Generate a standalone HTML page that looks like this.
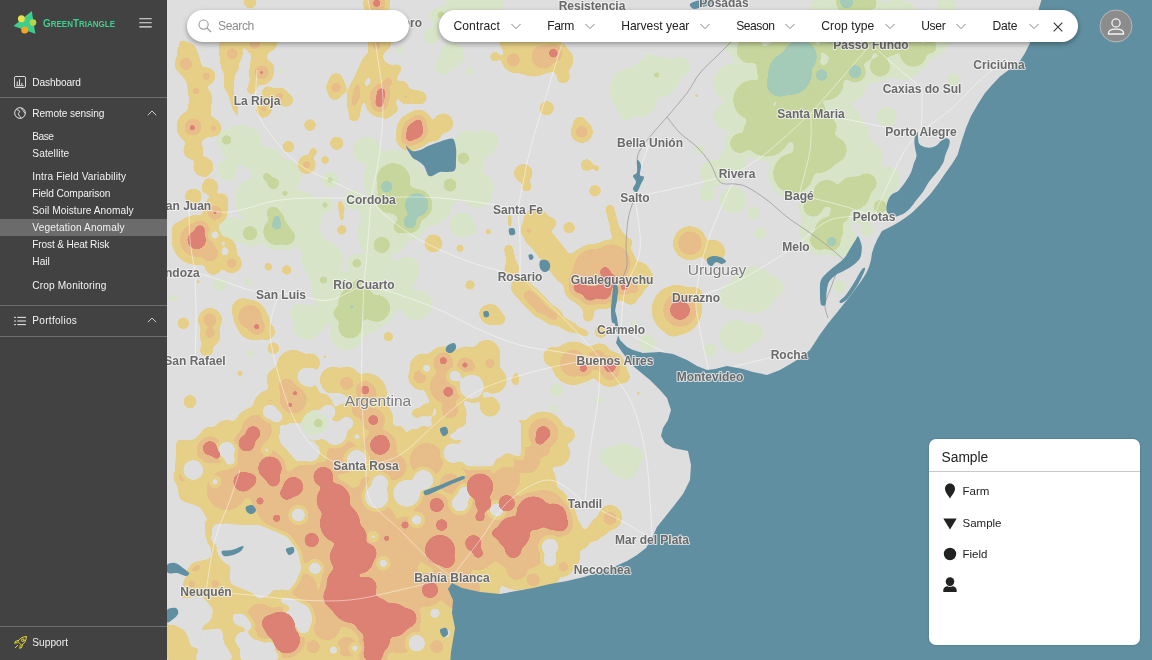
<!DOCTYPE html>
<html lang="en"><head><meta charset="utf-8"><title>GreenTriangle - Vegetation Anomaly</title>
<style>
*{box-sizing:border-box;margin:0;padding:0}
html,body{width:1152px;height:660px;overflow:hidden;background:#dedede;font-family:"Liberation Sans",sans-serif;}
#map{position:absolute;left:0;top:0;width:1152px;height:660px;display:block}
#map,#side,.pill,#legend{will-change:transform}
#side{position:absolute;left:0;top:0;width:167px;height:660px;background:#424242;color:#f2f2f2;font-size:10.15px}
#side .row{position:absolute;left:0;width:167px;height:17px;line-height:17px;white-space:nowrap}
#side .row span{position:absolute;left:32.3px;top:0}
#side .sel{background:#6b6b6b}
#side .hr{position:absolute;left:0;width:167px;height:1px;background:#6e6e6e}
#side svg{position:absolute}
.pill{position:absolute;top:10px;height:32px;border-radius:16px;background:#fff;box-shadow:0 2px 5px rgba(0,0,0,.35)}
.pill span{position:absolute;top:0;line-height:32px;font-size:12.1px;color:#222;white-space:nowrap}
.pill svg{position:absolute}
#legend{position:absolute;left:928.5px;top:439px;width:210.5px;height:205.5px;background:#fff;border-radius:7px;box-shadow:0 0 2px rgba(0,0,0,.25)}
#legend .t{position:absolute;left:12.5px;top:10px;font-size:13.8px;line-height:18px;color:#222}
#legend .hr{position:absolute;left:0;top:32px;width:210.5px;height:1px;background:#c9c9c9}
#legend .i{position:absolute;left:33.5px;font-size:11.5px;line-height:16px;color:#222}
#legend svg{position:absolute}
</style></head><body>
<svg id="map" width="1152" height="660" viewBox="0 0 1152 660">
<defs>
<filter id="goo" filterUnits="userSpaceOnUse" x="0" y="0" width="1152" height="660" color-interpolation-filters="sRGB"><feGaussianBlur stdDeviation="2.2"/><feColorMatrix values="1 0 0 0 0 0 1 0 0 0 0 0 1 0 0 0 0 0 16 -7"/></filter>
</defs>
<rect width="1152" height="660" fill="#dedede"/>
<g fill="#d7e4c8" filter="url(#goo)">
<circle cx="393.3" cy="180" r="30"/>
<circle cx="366.7" cy="150" r="13.3"/>
<circle cx="426.7" cy="200" r="26.7"/>
<circle cx="460" cy="160" r="16.7"/>
<circle cx="483.3" cy="143.3" r="13.3"/>
<circle cx="450" cy="186.7" r="16.7"/>
<circle cx="380" cy="213.3" r="20"/>
<circle cx="353.3" cy="200" r="10"/>
<circle cx="226.7" cy="140" r="9.3"/>
<circle cx="248.3" cy="163.3" r="5"/>
<circle cx="230" cy="176.7" r="4.7"/>
<circle cx="270" cy="180" r="10"/>
<circle cx="283.3" cy="196.7" r="8.3"/>
<circle cx="330" cy="180" r="6"/>
<circle cx="443.3" cy="66.7" r="8.3"/>
<circle cx="453.3" cy="60" r="5"/>
<circle cx="436.7" cy="16.7" r="7.3"/>
<circle cx="400" cy="50" r="4"/>
<circle cx="470" cy="71.7" r="4.3"/>
<circle cx="281.7" cy="70.7" r="3.3"/>
<circle cx="273.3" cy="213.3" r="11.7"/>
<circle cx="323.3" cy="205" r="6.7"/>
<circle cx="260" cy="206.7" r="6.7"/>
<circle cx="306.7" cy="213.3" r="6.7"/>
<circle cx="660" cy="76.7" r="20"/>
<circle cx="640" cy="100" r="16.7"/>
<circle cx="626.7" cy="110" r="10"/>
<circle cx="680" cy="66.7" r="10"/>
<circle cx="650" cy="60" r="6.7"/>
<circle cx="713.3" cy="173.3" r="13.3"/>
<circle cx="706.7" cy="193.3" r="8.3"/>
<circle cx="733.3" cy="200" r="13.3"/>
<circle cx="753.3" cy="213.3" r="6.7"/>
<circle cx="700" cy="150" r="5"/>
<circle cx="820" cy="6.7" r="10"/>
<circle cx="733.3" cy="83.3" r="20"/>
<circle cx="740" cy="40" r="16.7"/>
<circle cx="726.7" cy="116.7" r="13.3"/>
<circle cx="733.3" cy="160" r="13.3"/>
<circle cx="846.7" cy="83.3" r="20"/>
<circle cx="903.3" cy="60" r="20"/>
<circle cx="936.7" cy="40" r="13.3"/>
<circle cx="953.3" cy="80" r="6.7"/>
<circle cx="836.7" cy="106.7" r="13.3"/>
<circle cx="870" cy="156.7" r="13.3"/>
<circle cx="840" cy="173.3" r="16.7"/>
<circle cx="946.7" cy="6.7" r="10"/>
<circle cx="886.7" cy="116.7" r="10"/>
<circle cx="860" cy="133.3" r="10"/>
<circle cx="853.3" cy="26.7" r="30"/>
<circle cx="896.7" cy="30" r="30"/>
<circle cx="933.3" cy="33.3" r="20"/>
<circle cx="840" cy="66.7" r="20"/>
<circle cx="870" cy="66.7" r="16.7"/>
<circle cx="840" cy="126.7" r="23.3"/>
<circle cx="853.3" cy="160" r="26.7"/>
<circle cx="860" cy="193.3" r="30"/>
<circle cx="886.7" cy="180" r="13.3"/>
<circle cx="276.7" cy="230" r="20"/>
<circle cx="250" cy="233.3" r="13.3"/>
<circle cx="310" cy="240" r="13.3"/>
<circle cx="326.7" cy="260" r="16.7"/>
<circle cx="356.7" cy="303.3" r="33.3"/>
<circle cx="393.3" cy="293.3" r="16.7"/>
<circle cx="406.7" cy="270" r="13.3"/>
<circle cx="376.7" cy="263.3" r="16.7"/>
<circle cx="346.7" cy="333.3" r="16.7"/>
<circle cx="306.7" cy="326.7" r="13.3"/>
<circle cx="300" cy="313.3" r="10"/>
<circle cx="320" cy="276.7" r="10"/>
<circle cx="410" cy="223.3" r="16.7"/>
<circle cx="393.3" cy="240" r="13.3"/>
<circle cx="220" cy="285" r="6.7"/>
<circle cx="248.3" cy="281.7" r="4"/>
<circle cx="250" cy="353.3" r="4"/>
<circle cx="313.3" cy="423.3" r="11.7"/>
<circle cx="173.3" cy="298.3" r="4"/>
<circle cx="413.3" cy="310" r="10"/>
<circle cx="473.3" cy="230" r="5"/>
<circle cx="753.3" cy="290" r="23.3"/>
<circle cx="733.3" cy="296.7" r="13.3"/>
<circle cx="773.3" cy="286.7" r="10"/>
<circle cx="736.7" cy="336.7" r="16.7"/>
<circle cx="753.3" cy="333.3" r="10"/>
<circle cx="646.7" cy="343.3" r="8.3"/>
<circle cx="710" cy="350" r="6.7"/>
<circle cx="556.7" cy="390" r="6.7"/>
<circle cx="760" cy="233.3" r="6"/>
<circle cx="600" cy="400" r="4"/>
<circle cx="553.3" cy="408.3" r="4"/>
<circle cx="633.3" cy="323.3" r="3.3"/>
<circle cx="820" cy="230" r="20"/>
<circle cx="833.3" cy="240" r="13.3"/>
<circle cx="623.3" cy="460" r="16.7"/>
<circle cx="610" cy="456.7" r="10"/>
<circle cx="633.3" cy="456.7" r="10"/>
<circle cx="626.7" cy="470" r="10"/>
<circle cx="866.7" cy="230" r="6.7"/>
<circle cx="840" cy="286.7" r="6.7"/>
<circle cx="840" cy="240" r="16.7"/>
<circle cx="466" cy="3" r="20"/>
<circle cx="490" cy="2" r="14"/>
<circle cx="446" cy="16" r="9"/>
<circle cx="432" cy="36" r="8"/>
<circle cx="440" cy="26" r="6"/>
<circle cx="242" cy="145" r="20"/>
<circle cx="267" cy="165" r="17.5"/>
<circle cx="257" cy="200" r="22.5"/>
<circle cx="297" cy="215" r="25"/>
<circle cx="322" cy="260" r="20"/>
<circle cx="332" cy="290" r="20"/>
<circle cx="227" cy="170" r="10"/>
<circle cx="287" cy="175" r="15"/>
<circle cx="462" cy="160" r="22.5"/>
<circle cx="477" cy="190" r="17.5"/>
<circle cx="462" cy="225" r="12.5"/>
<circle cx="452" cy="55" r="12.5"/>
<circle cx="632" cy="90" r="22.5"/>
<circle cx="647" cy="75" r="15"/>
<circle cx="402" cy="280" r="12.5"/>
<circle cx="417" cy="305" r="15"/>
<circle cx="377" cy="235" r="20"/>
<circle cx="232" cy="230" r="12.5"/>
<circle cx="217" cy="260" r="7.5"/>
<circle cx="312" cy="320" r="15"/>
<circle cx="467" cy="140" r="10"/>
<circle cx="492" cy="140" r="7.5"/>
<circle cx="393.3" cy="180" r="21.7"/>
<circle cx="406.7" cy="203.3" r="21.7"/>
<circle cx="390" cy="200" r="18.3"/>
<circle cx="463.3" cy="158.3" r="11"/>
<circle cx="450" cy="185" r="11.7"/>
<circle cx="226.7" cy="140" r="10"/>
<circle cx="273.3" cy="183.3" r="11"/>
<circle cx="266.7" cy="176.7" r="9"/>
<circle cx="273.3" cy="213.3" r="11.7"/>
<circle cx="285" cy="193.3" r="8.3"/>
<circle cx="330" cy="180" r="8.3"/>
<circle cx="325" cy="205" r="8.3"/>
<circle cx="753.3" cy="100" r="25"/>
<circle cx="783.3" cy="66.7" r="31.7"/>
<circle cx="766.7" cy="133.3" r="28.3"/>
<circle cx="800" cy="116.7" r="31.7"/>
<circle cx="816.7" cy="150" r="28.3"/>
<circle cx="793.3" cy="173.3" r="25"/>
<circle cx="826.7" cy="83.3" r="21.7"/>
<circle cx="826.7" cy="193.3" r="18.3"/>
<circle cx="750" cy="50" r="18.3"/>
<circle cx="813.3" cy="206.7" r="15"/>
<circle cx="740" cy="143.3" r="15"/>
<circle cx="833.3" cy="43.3" r="18.3"/>
<circle cx="656.7" cy="75" r="8.3"/>
<circle cx="840" cy="66.7" r="18.3"/>
<circle cx="860" cy="50" r="18.3"/>
<circle cx="886.7" cy="40" r="21.7"/>
<circle cx="913.3" cy="53.3" r="18.3"/>
<circle cx="880" cy="66.7" r="15"/>
<circle cx="930" cy="46.7" r="11.7"/>
<circle cx="830" cy="33.3" r="15"/>
<circle cx="853.3" cy="10" r="18.3"/>
<circle cx="870" cy="3.3" r="11.7"/>
<circle cx="833.3" cy="150" r="18.3"/>
<circle cx="826.7" cy="126.7" r="15"/>
<circle cx="853.3" cy="193.3" r="21.7"/>
<circle cx="866.7" cy="183.3" r="15"/>
<circle cx="840" cy="213.3" r="15"/>
<circle cx="880" cy="206.7" r="11.7"/>
<circle cx="276.7" cy="231.7" r="18.3"/>
<circle cx="286.7" cy="236.7" r="13.3"/>
<circle cx="250" cy="233.3" r="12.3"/>
<circle cx="356.7" cy="303.3" r="23.3"/>
<circle cx="376.7" cy="308.3" r="18.3"/>
<circle cx="350" cy="326.7" r="16.7"/>
<circle cx="360" cy="286.7" r="13.3"/>
<circle cx="356.7" cy="263.3" r="9.7"/>
<circle cx="381.7" cy="245" r="13.3"/>
<circle cx="323.3" cy="280" r="9"/>
<circle cx="410" cy="223.3" r="15"/>
<circle cx="318.3" cy="423.3" r="9.7"/>
<circle cx="400" cy="226.7" r="11.7"/>
<circle cx="340" cy="313.3" r="11.7"/>
<circle cx="826.7" cy="230" r="16.7"/>
<circle cx="830" cy="230" r="18.3"/>
<circle cx="820" cy="240" r="15"/>
<circle cx="441" cy="15" r="9"/>
<circle cx="386.7" cy="186.7" r="15"/>
<circle cx="416.7" cy="205" r="20.7"/>
<circle cx="276.7" cy="218.3" r="12.3"/>
<circle cx="790" cy="73.3" r="30.7"/>
<circle cx="800" cy="56.7" r="25.7"/>
<circle cx="780" cy="83.3" r="22.3"/>
<circle cx="830" cy="36.7" r="15.7"/>
<circle cx="855" cy="71.7" r="15.7"/>
<circle cx="821.7" cy="75" r="15"/>
<circle cx="846.7" cy="1.7" r="15.7"/>
<circle cx="276.7" cy="225" r="14"/>
<circle cx="351.7" cy="306.7" r="11.7"/>
<circle cx="410" cy="221.7" r="15.7"/>
<circle cx="831.7" cy="241.7" r="14"/>
<circle cx="831.7" cy="241.7" r="13"/>
</g>
<g fill="#c7d69c" filter="url(#goo)">
<circle cx="393.3" cy="180" r="16.7"/>
<circle cx="406.7" cy="203.3" r="16.7"/>
<circle cx="390" cy="200" r="13.3"/>
<circle cx="463.3" cy="158.3" r="6"/>
<circle cx="450" cy="185" r="6.7"/>
<circle cx="226.7" cy="140" r="5"/>
<circle cx="273.3" cy="183.3" r="6"/>
<circle cx="266.7" cy="176.7" r="4"/>
<circle cx="273.3" cy="213.3" r="6.7"/>
<circle cx="285" cy="193.3" r="3.3"/>
<circle cx="330" cy="180" r="3.3"/>
<circle cx="325" cy="205" r="3.3"/>
<circle cx="753.3" cy="100" r="20"/>
<circle cx="783.3" cy="66.7" r="26.7"/>
<circle cx="766.7" cy="133.3" r="23.3"/>
<circle cx="800" cy="116.7" r="26.7"/>
<circle cx="816.7" cy="150" r="23.3"/>
<circle cx="793.3" cy="173.3" r="20"/>
<circle cx="826.7" cy="83.3" r="16.7"/>
<circle cx="826.7" cy="193.3" r="13.3"/>
<circle cx="750" cy="50" r="13.3"/>
<circle cx="813.3" cy="206.7" r="10"/>
<circle cx="740" cy="143.3" r="10"/>
<circle cx="833.3" cy="43.3" r="13.3"/>
<circle cx="656.7" cy="75" r="3.3"/>
<circle cx="840" cy="66.7" r="13.3"/>
<circle cx="860" cy="50" r="13.3"/>
<circle cx="886.7" cy="40" r="16.7"/>
<circle cx="913.3" cy="53.3" r="13.3"/>
<circle cx="880" cy="66.7" r="10"/>
<circle cx="930" cy="46.7" r="6.7"/>
<circle cx="830" cy="33.3" r="10"/>
<circle cx="853.3" cy="10" r="13.3"/>
<circle cx="870" cy="3.3" r="6.7"/>
<circle cx="833.3" cy="150" r="13.3"/>
<circle cx="826.7" cy="126.7" r="10"/>
<circle cx="853.3" cy="193.3" r="16.7"/>
<circle cx="866.7" cy="183.3" r="10"/>
<circle cx="840" cy="213.3" r="10"/>
<circle cx="880" cy="206.7" r="6.7"/>
<circle cx="276.7" cy="231.7" r="13.3"/>
<circle cx="286.7" cy="236.7" r="8.3"/>
<circle cx="250" cy="233.3" r="7.3"/>
<circle cx="356.7" cy="303.3" r="18.3"/>
<circle cx="376.7" cy="308.3" r="13.3"/>
<circle cx="350" cy="326.7" r="11.7"/>
<circle cx="360" cy="286.7" r="8.3"/>
<circle cx="356.7" cy="263.3" r="4.7"/>
<circle cx="381.7" cy="245" r="8.3"/>
<circle cx="323.3" cy="280" r="4"/>
<circle cx="410" cy="223.3" r="10"/>
<circle cx="318.3" cy="423.3" r="4.7"/>
<circle cx="400" cy="226.7" r="6.7"/>
<circle cx="340" cy="313.3" r="6.7"/>
<circle cx="826.7" cy="230" r="11.7"/>
<circle cx="830" cy="230" r="13.3"/>
<circle cx="820" cy="240" r="10"/>
<circle cx="441" cy="15" r="4"/>
<circle cx="386.7" cy="186.7" r="10"/>
<circle cx="416.7" cy="205" r="15.7"/>
<circle cx="276.7" cy="218.3" r="7.3"/>
<circle cx="790" cy="73.3" r="25.7"/>
<circle cx="800" cy="56.7" r="20.7"/>
<circle cx="780" cy="83.3" r="17.3"/>
<circle cx="830" cy="36.7" r="10.7"/>
<circle cx="855" cy="71.7" r="10.7"/>
<circle cx="821.7" cy="75" r="10"/>
<circle cx="846.7" cy="1.7" r="10.7"/>
<circle cx="276.7" cy="225" r="9"/>
<circle cx="351.7" cy="306.7" r="6.7"/>
<circle cx="410" cy="221.7" r="10.7"/>
<circle cx="831.7" cy="241.7" r="9"/>
<circle cx="831.7" cy="241.7" r="8"/>
</g>
<g fill="#a3cbb8" filter="url(#goo)">
<circle cx="386.7" cy="186.7" r="6"/>
<circle cx="416.7" cy="205" r="11.7"/>
<circle cx="276.7" cy="218.3" r="3.3"/>
<circle cx="790" cy="73.3" r="21.7"/>
<circle cx="800" cy="56.7" r="16.7"/>
<circle cx="780" cy="83.3" r="13.3"/>
<circle cx="830" cy="36.7" r="6.7"/>
<circle cx="855" cy="71.7" r="6.7"/>
<circle cx="821.7" cy="75" r="6"/>
<circle cx="846.7" cy="1.7" r="6.7"/>
<circle cx="276.7" cy="225" r="5"/>
<circle cx="351.7" cy="306.7" r="2.7"/>
<circle cx="410" cy="221.7" r="6.7"/>
<circle cx="831.7" cy="241.7" r="5"/>
<circle cx="831.7" cy="241.7" r="4"/>
</g>
<mask id="mH" maskUnits="userSpaceOnUse" x="0" y="0" width="1152" height="660"><rect width="1152" height="660" fill="#fff"/><g fill="#000" filter="url(#goo)">
<polygon points="466,421 521,421 521,457.3 507.3,452.7 496,452.7 493.7,466.3 466.3,466.3 455,452.7 462,440"/>
<polygon points="213.1,524.2 259.8,525.3 287.4,537 298,551.8 301.2,568.8 295.9,581.6 287.4,592.2 275.7,577.3 270.4,594.3 259.8,598.6 253.4,593.2 230.1,583.7 232.2,566.7 230.1,560.3 219.4,545.5 211,541.2"/>
<polygon points="167.4,520 204.6,520 205.6,541.2 211,547.6 211,558.2 191.8,562.5 185.5,573.1 167.4,575.2"/>
<polygon points="167.4,594.3 183.4,598.6 202.5,596.4 213.1,609.2 211,619.8 202.5,626.2 198.2,634.6 200.3,647.4 191.8,647.4 185.5,630.4 172.7,624 167.4,626.2"/>
<polygon points="232.2,613.4 244.9,614.5 252.4,626.2 249.2,631.5 238.6,624 233.2,621.9"/>
<polygon points="202.5,630.4 221.6,628.3 223.7,643.1 232.2,655.9 232.2,660.1 194,660.1 200.3,647.4"/>
<polygon points="240.7,647.4 253.4,638.9 270.4,645.3 278.9,655.9 278.9,660.1 240.7,660.1"/>
<polygon points="281,597.5 291.6,598.6 308.6,607 312.9,619.8 308.6,628.3 302.3,613.4 287.4,604.9 280,601.7"/>
<circle cx="310" cy="380" r="7.3"/>
<circle cx="313.3" cy="373.3" r="5"/>
<circle cx="471.7" cy="386.7" r="12"/>
<circle cx="455" cy="376" r="5.7"/>
<circle cx="426.7" cy="368.3" r="4"/>
<circle cx="276.7" cy="416.7" r="6"/>
<circle cx="225" cy="251.7" r="4"/>
<circle cx="223.3" cy="243.3" r="2.7"/>
<circle cx="215" cy="235" r="4"/>
<circle cx="236.7" cy="546.7" r="20"/>
<circle cx="263.3" cy="553.3" r="23.3"/>
<circle cx="276.7" cy="573.3" r="16.7"/>
<circle cx="243.3" cy="573.3" r="13.3"/>
<circle cx="226.7" cy="533.3" r="10"/>
<circle cx="193.3" cy="470" r="10"/>
<circle cx="226.7" cy="450" r="8.3"/>
<circle cx="230" cy="460" r="5"/>
<circle cx="298.3" cy="515" r="6.7"/>
<circle cx="293.3" cy="448.3" r="6"/>
<circle cx="356.7" cy="460" r="10"/>
<circle cx="376.7" cy="496.7" r="11.7"/>
<circle cx="380" cy="483.3" r="8.3"/>
<circle cx="406.7" cy="493.3" r="13.3"/>
<circle cx="423.3" cy="480" r="10"/>
<circle cx="416.7" cy="520" r="5"/>
<circle cx="460" cy="503.3" r="8.3"/>
<circle cx="465" cy="493.3" r="6.7"/>
<circle cx="315" cy="568.3" r="6"/>
<circle cx="355" cy="648.3" r="3.3"/>
<circle cx="260" cy="595" r="4"/>
<circle cx="293.3" cy="616.7" r="8.3"/>
<circle cx="303.3" cy="626.7" r="6.7"/>
<circle cx="240" cy="620" r="6"/>
<circle cx="270" cy="646.7" r="5"/>
<circle cx="253.3" cy="653.3" r="13.3"/>
<circle cx="243.3" cy="640" r="8.3"/>
<circle cx="416.7" cy="643.3" r="8.3"/>
<circle cx="333.3" cy="650" r="4"/>
<circle cx="446.7" cy="633.3" r="4"/>
<circle cx="435" cy="613.3" r="5"/>
<circle cx="383.3" cy="563.3" r="4"/>
<circle cx="373.3" cy="536.7" r="2.7"/>
<circle cx="496.7" cy="510" r="6.7"/>
<circle cx="266.7" cy="450" r="2.7"/>
<circle cx="188.3" cy="506.7" r="4"/>
<circle cx="215" cy="481.7" r="3.3"/>
<circle cx="453.3" cy="453.3" r="10"/>
<circle cx="496.7" cy="450" r="8.3"/>
<circle cx="473.3" cy="446.7" r="5"/>
<circle cx="550" cy="546.7" r="8.3"/>
<circle cx="550" cy="560" r="6.7"/>
<circle cx="306.7" cy="376.7" r="9.3"/>
<circle cx="293.3" cy="436.7" r="14"/>
<circle cx="316.7" cy="425" r="15"/>
<circle cx="335" cy="433.3" r="11.7"/>
<circle cx="310" cy="451.7" r="10"/>
<circle cx="328.3" cy="411.7" r="7.3"/>
<circle cx="270" cy="411.7" r="7.3"/>
<circle cx="300" cy="453.3" r="8.3"/>
<circle cx="346.7" cy="423.3" r="6.7"/>
<circle cx="226.7" cy="411.7" r="8.3"/>
<circle cx="200" cy="420" r="6.7"/>
<circle cx="552.1" cy="249.8" r="2.5"/>
</g></mask>
<mask id="mK" maskUnits="userSpaceOnUse" x="0" y="0" width="1152" height="660"><rect width="1152" height="660" fill="#fff"/><g fill="#000" filter="url(#goo)">
<polygon points="466,421 521,421 521,457.3 507.3,452.7 496,452.7 493.7,466.3 466.3,466.3 455,452.7 462,440" stroke="#000" stroke-width="7" stroke-linejoin="round"/>
<polygon points="213.1,524.2 259.8,525.3 287.4,537 298,551.8 301.2,568.8 295.9,581.6 287.4,592.2 275.7,577.3 270.4,594.3 259.8,598.6 253.4,593.2 230.1,583.7 232.2,566.7 230.1,560.3 219.4,545.5 211,541.2" stroke="#000" stroke-width="7" stroke-linejoin="round"/>
<polygon points="167.4,520 204.6,520 205.6,541.2 211,547.6 211,558.2 191.8,562.5 185.5,573.1 167.4,575.2" stroke="#000" stroke-width="7" stroke-linejoin="round"/>
<polygon points="167.4,594.3 183.4,598.6 202.5,596.4 213.1,609.2 211,619.8 202.5,626.2 198.2,634.6 200.3,647.4 191.8,647.4 185.5,630.4 172.7,624 167.4,626.2" stroke="#000" stroke-width="7" stroke-linejoin="round"/>
<polygon points="232.2,613.4 244.9,614.5 252.4,626.2 249.2,631.5 238.6,624 233.2,621.9" stroke="#000" stroke-width="7" stroke-linejoin="round"/>
<polygon points="202.5,630.4 221.6,628.3 223.7,643.1 232.2,655.9 232.2,660.1 194,660.1 200.3,647.4" stroke="#000" stroke-width="7" stroke-linejoin="round"/>
<polygon points="240.7,647.4 253.4,638.9 270.4,645.3 278.9,655.9 278.9,660.1 240.7,660.1" stroke="#000" stroke-width="7" stroke-linejoin="round"/>
<polygon points="281,597.5 291.6,598.6 308.6,607 312.9,619.8 308.6,628.3 302.3,613.4 287.4,604.9 280,601.7" stroke="#000" stroke-width="7" stroke-linejoin="round"/>
<circle cx="310" cy="380" r="10.8"/>
<circle cx="313.3" cy="373.3" r="8.5"/>
<circle cx="471.7" cy="386.7" r="15.5"/>
<circle cx="455" cy="376" r="9.2"/>
<circle cx="426.7" cy="368.3" r="7.5"/>
<circle cx="276.7" cy="416.7" r="9.5"/>
<circle cx="225" cy="251.7" r="7.5"/>
<circle cx="223.3" cy="243.3" r="6.2"/>
<circle cx="215" cy="235" r="7.5"/>
<circle cx="236.7" cy="546.7" r="23.5"/>
<circle cx="263.3" cy="553.3" r="26.8"/>
<circle cx="276.7" cy="573.3" r="20.2"/>
<circle cx="243.3" cy="573.3" r="16.8"/>
<circle cx="226.7" cy="533.3" r="13.5"/>
<circle cx="193.3" cy="470" r="13.5"/>
<circle cx="226.7" cy="450" r="11.8"/>
<circle cx="230" cy="460" r="8.5"/>
<circle cx="298.3" cy="515" r="10.2"/>
<circle cx="293.3" cy="448.3" r="9.5"/>
<circle cx="356.7" cy="460" r="13.5"/>
<circle cx="376.7" cy="496.7" r="15.2"/>
<circle cx="380" cy="483.3" r="11.8"/>
<circle cx="406.7" cy="493.3" r="16.8"/>
<circle cx="423.3" cy="480" r="13.5"/>
<circle cx="416.7" cy="520" r="8.5"/>
<circle cx="460" cy="503.3" r="11.8"/>
<circle cx="465" cy="493.3" r="10.2"/>
<circle cx="315" cy="568.3" r="9.5"/>
<circle cx="355" cy="648.3" r="6.8"/>
<circle cx="260" cy="595" r="7.5"/>
<circle cx="293.3" cy="616.7" r="11.8"/>
<circle cx="303.3" cy="626.7" r="10.2"/>
<circle cx="240" cy="620" r="9.5"/>
<circle cx="270" cy="646.7" r="8.5"/>
<circle cx="253.3" cy="653.3" r="16.8"/>
<circle cx="243.3" cy="640" r="11.8"/>
<circle cx="416.7" cy="643.3" r="11.8"/>
<circle cx="333.3" cy="650" r="7.5"/>
<circle cx="446.7" cy="633.3" r="7.5"/>
<circle cx="435" cy="613.3" r="8.5"/>
<circle cx="383.3" cy="563.3" r="7.5"/>
<circle cx="373.3" cy="536.7" r="6.2"/>
<circle cx="496.7" cy="510" r="10.2"/>
<circle cx="266.7" cy="450" r="6.2"/>
<circle cx="188.3" cy="506.7" r="7.5"/>
<circle cx="215" cy="481.7" r="6.8"/>
<circle cx="453.3" cy="453.3" r="13.5"/>
<circle cx="496.7" cy="450" r="11.8"/>
<circle cx="473.3" cy="446.7" r="8.5"/>
<circle cx="550" cy="546.7" r="11.8"/>
<circle cx="550" cy="560" r="10.2"/>
<circle cx="306.7" cy="376.7" r="12.8"/>
<circle cx="293.3" cy="436.7" r="17.5"/>
<circle cx="316.7" cy="425" r="18.5"/>
<circle cx="335" cy="433.3" r="15.2"/>
<circle cx="310" cy="451.7" r="13.5"/>
<circle cx="328.3" cy="411.7" r="10.8"/>
<circle cx="270" cy="411.7" r="10.8"/>
<circle cx="300" cy="453.3" r="11.8"/>
<circle cx="346.7" cy="423.3" r="10.2"/>
<circle cx="226.7" cy="411.7" r="11.8"/>
<circle cx="200" cy="420" r="10.2"/>
<circle cx="552.1" cy="249.8" r="6"/>
</g></mask>
<g mask="url(#mH)"><g fill="#e6cf87" filter="url(#goo)">
<polygon points="176.7,440 500,440 500,660 166.7,660 166.7,613.3 180,600 190,586.7 186.7,566.7 206.7,550 210,523.3 200,506.7 180,500 175,473.3"/>
<circle cx="193.3" cy="126.7" r="16.7"/>
<circle cx="210" cy="126.7" r="10"/>
<circle cx="193.3" cy="150" r="10"/>
<circle cx="203.3" cy="166.7" r="10"/>
<circle cx="210" cy="186.7" r="8.3"/>
<circle cx="193.3" cy="196.7" r="8.3"/>
<circle cx="376.7" cy="10" r="10"/>
<circle cx="413.3" cy="130" r="16.7"/>
<circle cx="443.3" cy="123.3" r="10"/>
<circle cx="433.3" cy="133.3" r="8.3"/>
<circle cx="310" cy="125" r="6"/>
<circle cx="288.3" cy="146.7" r="6"/>
<circle cx="306.7" cy="163.3" r="8.3"/>
<circle cx="313.3" cy="151.7" r="4"/>
<circle cx="336.7" cy="143.3" r="6.7"/>
<circle cx="325" cy="160" r="4.3"/>
<circle cx="495" cy="56.7" r="5"/>
<circle cx="216.7" cy="206.7" r="11.7"/>
<circle cx="221.7" cy="200" r="6.7"/>
<circle cx="341.7" cy="208.3" r="3.3"/>
<circle cx="250" cy="1.7" r="6.7"/>
<circle cx="533.3" cy="53.3" r="23.3"/>
<circle cx="516.7" cy="60" r="13.3"/>
<circle cx="560" cy="60" r="13.3"/>
<circle cx="563.3" cy="76.7" r="6.7"/>
<circle cx="510" cy="43.3" r="10"/>
<circle cx="546.7" cy="108.3" r="7.3"/>
<circle cx="581.7" cy="131.7" r="10.7"/>
<circle cx="580" cy="123.3" r="6.7"/>
<circle cx="523.3" cy="173.3" r="9.3"/>
<circle cx="526.7" cy="186.7" r="5"/>
<circle cx="586.7" cy="165" r="6"/>
<circle cx="596.7" cy="168.3" r="3.3"/>
<circle cx="595" cy="190.7" r="6"/>
<circle cx="696.7" cy="95.7" r="2.7"/>
<circle cx="196.7" cy="240" r="25"/>
<circle cx="223.3" cy="250" r="13.3"/>
<circle cx="231.7" cy="263.3" r="10"/>
<circle cx="213.3" cy="266.7" r="8.3"/>
<circle cx="180" cy="230" r="8.3"/>
<circle cx="210" cy="320" r="11.7"/>
<circle cx="210" cy="336.7" r="10"/>
<circle cx="206.7" cy="350" r="6.7"/>
<circle cx="183.3" cy="323.3" r="6"/>
<circle cx="190" cy="401.7" r="6.7"/>
<circle cx="240" cy="373.3" r="3.3"/>
<circle cx="273.3" cy="348.3" r="6"/>
<circle cx="243.3" cy="310" r="11.7"/>
<circle cx="253.3" cy="323.3" r="16.7"/>
<circle cx="266.7" cy="331.7" r="8.3"/>
<circle cx="286.7" cy="270" r="5"/>
<circle cx="268.3" cy="266.7" r="4.3"/>
<circle cx="341.7" cy="230" r="5"/>
<circle cx="433.3" cy="243.3" r="9"/>
<circle cx="460" cy="248.3" r="4"/>
<circle cx="470" cy="285" r="5"/>
<circle cx="388.3" cy="336.7" r="5"/>
<circle cx="488.3" cy="231.7" r="3.3"/>
<circle cx="198.3" cy="281.7" r="2.7"/>
<circle cx="450" cy="270" r="2"/>
<circle cx="325" cy="356.7" r="2.7"/>
<circle cx="293.3" cy="366.7" r="16.7"/>
<circle cx="310" cy="363.3" r="10"/>
<circle cx="293.3" cy="400" r="26.7"/>
<circle cx="270" cy="406.7" r="16.7"/>
<circle cx="256.7" cy="430" r="23.3"/>
<circle cx="320" cy="406.7" r="13.3"/>
<circle cx="333.3" cy="380" r="13.3"/>
<circle cx="346.7" cy="380" r="13.3"/>
<circle cx="366.7" cy="393.3" r="20"/>
<circle cx="373.3" cy="420" r="20"/>
<circle cx="346.7" cy="420" r="16.7"/>
<circle cx="320" cy="433.3" r="13.3"/>
<circle cx="226.7" cy="433.3" r="13.3"/>
<circle cx="210" cy="436.7" r="10"/>
<circle cx="280" cy="380" r="13.3"/>
<circle cx="423.3" cy="366.7" r="13.3"/>
<circle cx="443.3" cy="363.3" r="16.7"/>
<circle cx="466.7" cy="363.3" r="16.7"/>
<circle cx="486.7" cy="353.3" r="13.3"/>
<circle cx="493.3" cy="380" r="13.3"/>
<circle cx="446.7" cy="390" r="20"/>
<circle cx="420" cy="380" r="10"/>
<circle cx="453.3" cy="413.3" r="13.3"/>
<circle cx="473.3" cy="393.3" r="10"/>
<circle cx="490" cy="313.3" r="7.3"/>
<circle cx="426.7" cy="410" r="6.7"/>
<circle cx="416.7" cy="413.3" r="5"/>
<circle cx="490" cy="406.7" r="10"/>
<circle cx="690" cy="243.3" r="16.7"/>
<circle cx="713.3" cy="251.7" r="11.7"/>
<circle cx="676.7" cy="310" r="25"/>
<circle cx="673.3" cy="326.7" r="10"/>
<circle cx="693.3" cy="296.7" r="10"/>
<circle cx="573.3" cy="363.3" r="21.7"/>
<circle cx="553.3" cy="356.7" r="10"/>
<circle cx="600" cy="353.3" r="10"/>
<circle cx="610" cy="370" r="16.7"/>
<circle cx="623.3" cy="376.7" r="6.7"/>
<circle cx="515" cy="380" r="4"/>
<circle cx="638.3" cy="393.3" r="2.7"/>
<circle cx="543.3" cy="433.3" r="21.7"/>
<circle cx="520" cy="426.7" r="6.7"/>
<circle cx="566.7" cy="435" r="8.3"/>
<circle cx="665" cy="232.7" r="2"/>
<circle cx="516.7" cy="456.7" r="26.7"/>
<circle cx="540" cy="450" r="20"/>
<circle cx="556.7" cy="453.3" r="13.3"/>
<circle cx="533.3" cy="483.3" r="23.3"/>
<circle cx="550" cy="506.7" r="20"/>
<circle cx="516.7" cy="523.3" r="33.3"/>
<circle cx="566.7" cy="533.3" r="16.7"/>
<circle cx="516.7" cy="566.7" r="23.3"/>
<circle cx="543.3" cy="573.3" r="16.7"/>
<circle cx="610" cy="516.7" r="11.7"/>
<circle cx="600" cy="526.7" r="10"/>
<circle cx="593.3" cy="533.3" r="8.3"/>
<circle cx="580" cy="540" r="10"/>
<circle cx="566.7" cy="556.7" r="13.3"/>
<circle cx="506.7" cy="490" r="20"/>
<circle cx="326.6" cy="60" r="1.8"/>
<circle cx="402.7" cy="86.4" r="5.6"/>
<circle cx="234.5" cy="42.4" r="9"/>
<circle cx="266.1" cy="41.3" r="11.3"/>
<circle cx="182.6" cy="43.5" r="3.4"/>
<circle cx="448.2" cy="425.5" r="9.1"/>
<circle cx="459.5" cy="420.9" r="6.8"/>
<circle cx="436.8" cy="420.9" r="5.7"/>
<circle cx="501.6" cy="459.5" r="5.7"/>
<circle cx="414.1" cy="436.8" r="8"/>
<circle cx="432.3" cy="435.7" r="9.1"/>
<circle cx="398.2" cy="432.3" r="6.8"/>
<circle cx="445.9" cy="441.4" r="5.7"/>
<circle cx="423.2" cy="430" r="4.5"/>
<circle cx="218.4" cy="556.1" r="9.6"/>
<circle cx="200.3" cy="575.2" r="11.7"/>
<circle cx="208.8" cy="532.7" r="3"/>
<circle cx="528.8" cy="227.6" r="7.4"/>
<circle cx="550" cy="223.3" r="6.4"/>
<circle cx="590.3" cy="274.2" r="27.6"/>
<circle cx="611.5" cy="267.9" r="25.5"/>
<circle cx="598.8" cy="284.8" r="21.2"/>
<circle cx="628.5" cy="242.4" r="4.2"/>
<circle cx="636.9" cy="276.4" r="14.8"/>
<circle cx="647.6" cy="278.5" r="6.4"/>
<circle cx="630.6" cy="297.6" r="7.4"/>
<circle cx="490.6" cy="314.5" r="10.6"/>
<circle cx="499.1" cy="318.8" r="6.4"/>
<circle cx="569.1" cy="227.6" r="5.9"/>
<circle cx="487.4" cy="231.8" r="1.9"/>
<circle cx="587.1" cy="211.7" r="1.5"/>
<circle cx="571.8" cy="208.1" r="1.5"/>
<circle cx="579.7" cy="228" r="1.5"/>
<circle cx="665.6" cy="232.9" r="2.1"/>
<circle cx="656" cy="260.4" r="1.5"/>
<circle cx="600.9" cy="331.5" r="6.4"/>
<circle cx="193.3" cy="126.7" r="13.3"/>
<circle cx="213.3" cy="128.3" r="8.3"/>
<circle cx="376.7" cy="6.7" r="11.7"/>
<circle cx="413.3" cy="130" r="15"/>
<circle cx="306.7" cy="165" r="9"/>
<circle cx="213.3" cy="211.7" r="10"/>
<circle cx="543.3" cy="56.7" r="16.7"/>
<circle cx="513.3" cy="60" r="11.7"/>
<circle cx="581.7" cy="131.7" r="11"/>
<circle cx="196.7" cy="240" r="21.7"/>
<circle cx="210" cy="253.3" r="13.3"/>
<circle cx="231.7" cy="263.3" r="10"/>
<circle cx="210" cy="320" r="11.7"/>
<circle cx="210" cy="333.3" r="10"/>
<circle cx="250" cy="316.7" r="16.7"/>
<circle cx="256.7" cy="326.7" r="13.3"/>
<circle cx="293.3" cy="400" r="18.3"/>
<circle cx="286.7" cy="386.7" r="13.3"/>
<circle cx="256.7" cy="430" r="20"/>
<circle cx="270" cy="406.7" r="11.7"/>
<circle cx="366.7" cy="393.3" r="15"/>
<circle cx="346.7" cy="383.3" r="11.7"/>
<circle cx="373.3" cy="420" r="16.7"/>
<circle cx="360" cy="410" r="13.3"/>
<circle cx="446.7" cy="386.7" r="21.7"/>
<circle cx="443.3" cy="363.3" r="15"/>
<circle cx="466.7" cy="366.7" r="13.3"/>
<circle cx="420" cy="376.7" r="11.7"/>
<circle cx="450" cy="410" r="13.3"/>
<circle cx="486.7" cy="313.3" r="7.7"/>
<circle cx="490" cy="363.3" r="10"/>
<circle cx="690" cy="243.3" r="16.7"/>
<circle cx="680" cy="310" r="21.7"/>
<circle cx="573.3" cy="363.3" r="18.3"/>
<circle cx="596.7" cy="360" r="15"/>
<circle cx="610" cy="370" r="15"/>
<circle cx="543.3" cy="433.3" r="20"/>
<circle cx="260" cy="473.3" r="31.7"/>
<circle cx="310" cy="490" r="31.7"/>
<circle cx="293.3" cy="523.3" r="25"/>
<circle cx="326.7" cy="540" r="38.3"/>
<circle cx="360" cy="590" r="45"/>
<circle cx="376.7" cy="523.3" r="25"/>
<circle cx="410" cy="540" r="25"/>
<circle cx="443.3" cy="540" r="35"/>
<circle cx="476.7" cy="506.7" r="31.7"/>
<circle cx="426.7" cy="506.7" r="18.3"/>
<circle cx="393.3" cy="466.7" r="18.3"/>
<circle cx="380" cy="446.7" r="21.7"/>
<circle cx="210" cy="450" r="18.3"/>
<circle cx="243.3" cy="480" r="21.7"/>
<circle cx="303.3" cy="586.7" r="18.3"/>
<circle cx="280" cy="630" r="28.3"/>
<circle cx="260" cy="616.7" r="18.3"/>
<circle cx="400" cy="633.3" r="25"/>
<circle cx="426.7" cy="590" r="21.7"/>
<circle cx="443.3" cy="580" r="18.3"/>
<circle cx="460" cy="556.7" r="21.7"/>
<circle cx="366.7" cy="483.3" r="11.7"/>
<circle cx="436.7" cy="646.7" r="11.7"/>
<circle cx="193.3" cy="476.7" r="10"/>
<circle cx="183.3" cy="476.7" r="10"/>
<circle cx="206.7" cy="530" r="8.3"/>
<circle cx="326.7" cy="626.7" r="18.3"/>
<circle cx="313.3" cy="646.7" r="11.7"/>
<circle cx="346.7" cy="646.7" r="15"/>
<circle cx="195" cy="566.7" r="10"/>
<circle cx="226.7" cy="490" r="25"/>
<circle cx="276.7" cy="506.7" r="25"/>
<circle cx="360" cy="506.7" r="25"/>
<circle cx="393.3" cy="556.7" r="31.7"/>
<circle cx="460" cy="590" r="25"/>
<circle cx="476.7" cy="550" r="25"/>
<circle cx="410" cy="590" r="25"/>
<circle cx="310" cy="606.7" r="21.7"/>
<circle cx="243.3" cy="460" r="18.3"/>
<circle cx="343.3" cy="456.7" r="21.7"/>
<circle cx="426.7" cy="460" r="21.7"/>
<circle cx="476.7" cy="460" r="21.7"/>
<circle cx="450" cy="483.3" r="15"/>
<circle cx="526.7" cy="460" r="18.3"/>
<circle cx="543.3" cy="450" r="11.7"/>
<circle cx="520" cy="533.3" r="41.7"/>
<circle cx="543.3" cy="513.3" r="28.3"/>
<circle cx="560" cy="523.3" r="18.3"/>
<circle cx="610" cy="518.3" r="11.7"/>
<circle cx="563.3" cy="566.7" r="10"/>
<circle cx="516.7" cy="570" r="15"/>
<circle cx="533.3" cy="580" r="11.7"/>
<circle cx="506.7" cy="480" r="18.3"/>
<circle cx="186" cy="63.9" r="11.3"/>
<circle cx="206.3" cy="76.3" r="9.1"/>
<circle cx="196.1" cy="90.9" r="8.6"/>
<circle cx="232.2" cy="53.7" r="10.6"/>
<circle cx="261.6" cy="71.8" r="10"/>
<circle cx="279.6" cy="96.6" r="9.1"/>
<circle cx="263.8" cy="109" r="8.2"/>
<circle cx="336.1" cy="87.6" r="10"/>
<circle cx="356.4" cy="95.5" r="9.1"/>
<circle cx="376.7" cy="45.8" r="9.1"/>
<circle cx="380.1" cy="95.5" r="15.2"/>
<circle cx="388" cy="81.9" r="9.5"/>
<circle cx="406" cy="96.6" r="7.7"/>
<circle cx="254.8" cy="43.5" r="10.6"/>
<circle cx="191.8" cy="583.7" r="8.8"/>
<circle cx="215.2" cy="583.7" r="9.2"/>
<circle cx="528.8" cy="230.8" r="8"/>
<circle cx="594.5" cy="270" r="26.2"/>
<circle cx="611.5" cy="263.6" r="24.1"/>
<circle cx="598.8" cy="289.1" r="19.8"/>
<circle cx="581.8" cy="280.6" r="17.7"/>
<circle cx="511.8" cy="268.9" r="7.5"/>
<circle cx="628.5" cy="284.8" r="11.4"/>
<circle cx="634.8" cy="289.1" r="9.2"/>
<circle cx="192.3" cy="127.7" r="12.8"/>
<circle cx="415" cy="130.7" r="17.8"/>
<circle cx="410" cy="136.7" r="14.2"/>
<circle cx="418.3" cy="123.3" r="13.5"/>
<circle cx="215" cy="212.7" r="12.2"/>
<circle cx="376.7" cy="3.3" r="13.5"/>
<circle cx="553.3" cy="53.3" r="14.2"/>
<circle cx="196.7" cy="240" r="18.8"/>
<circle cx="200" cy="230" r="14.5"/>
<circle cx="256.7" cy="326.7" r="12.8"/>
<circle cx="295" cy="393.3" r="12.5"/>
<circle cx="290" cy="405" r="12.5"/>
<circle cx="253.3" cy="433.3" r="16.8"/>
<circle cx="365" cy="390" r="14.2"/>
<circle cx="373.3" cy="420" r="14.8"/>
<circle cx="443.3" cy="360.7" r="13.5"/>
<circle cx="465" cy="365" r="12.8"/>
<circle cx="448.3" cy="391.7" r="14.8"/>
<circle cx="383.3" cy="438.3" r="12.8"/>
<circle cx="680" cy="310" r="19.5"/>
<circle cx="583.3" cy="368.3" r="13.5"/>
<circle cx="610" cy="366.7" r="15.5"/>
<circle cx="543.3" cy="433.3" r="16.8"/>
<circle cx="210" cy="448.3" r="16.8"/>
<circle cx="216.7" cy="455" r="13.5"/>
<circle cx="246.7" cy="443.3" r="17.8"/>
<circle cx="270" cy="468.3" r="21.2"/>
<circle cx="273.3" cy="480" r="16.2"/>
<circle cx="243.3" cy="481.7" r="19.5"/>
<circle cx="250" cy="480" r="16.2"/>
<circle cx="293.3" cy="486.7" r="19.5"/>
<circle cx="286.7" cy="493.3" r="16.2"/>
<circle cx="260" cy="501" r="13.5"/>
<circle cx="276.7" cy="518.3" r="13.5"/>
<circle cx="311.7" cy="540" r="16.8"/>
<circle cx="380" cy="445" r="19.5"/>
<circle cx="386.7" cy="538.3" r="12.8"/>
<circle cx="405" cy="525" r="13.5"/>
<circle cx="436.7" cy="505" r="16.8"/>
<circle cx="441.7" cy="525" r="15.5"/>
<circle cx="480" cy="486.7" r="22.8"/>
<circle cx="483.3" cy="503.3" r="17.8"/>
<circle cx="480" cy="516.7" r="14.5"/>
<circle cx="440" cy="550" r="24.5"/>
<circle cx="446.7" cy="560" r="17.8"/>
<circle cx="473.3" cy="543.3" r="17.8"/>
<circle cx="478.3" cy="553.3" r="14.5"/>
<circle cx="496.7" cy="533.3" r="14.5"/>
<circle cx="430" cy="590" r="17.8"/>
<circle cx="323.3" cy="476.7" r="19.5"/>
<circle cx="333.3" cy="500" r="26.2"/>
<circle cx="340" cy="523.3" r="29.5"/>
<circle cx="353.3" cy="536.7" r="22.8"/>
<circle cx="346.7" cy="556.7" r="26.2"/>
<circle cx="360" cy="560" r="22.8"/>
<circle cx="366.7" cy="553.3" r="19.5"/>
<circle cx="343.3" cy="583.3" r="26.2"/>
<circle cx="353.3" cy="600" r="32.8"/>
<circle cx="336.7" cy="596.7" r="22.8"/>
<circle cx="373.3" cy="616.7" r="29.5"/>
<circle cx="393.3" cy="620" r="26.2"/>
<circle cx="406.7" cy="618.3" r="19.5"/>
<circle cx="376.7" cy="640" r="22.8"/>
<circle cx="373.3" cy="653.3" r="19.5"/>
<circle cx="366.7" cy="586.7" r="19.5"/>
<circle cx="280" cy="626.7" r="24.5"/>
<circle cx="286.7" cy="640" r="22.8"/>
<circle cx="270" cy="623.3" r="17.8"/>
<circle cx="533.3" cy="513.3" r="26.2"/>
<circle cx="553.3" cy="516.7" r="22.8"/>
<circle cx="513.3" cy="533.3" r="26.2"/>
<circle cx="513.3" cy="550" r="17.8"/>
<circle cx="506.7" cy="503.3" r="17.8"/>
<circle cx="560" cy="523.3" r="17.8"/>
<circle cx="540" cy="440" r="14.5"/>
<circle cx="261.6" cy="72.4" r="12.2"/>
<circle cx="579.7" cy="287" r="15.9"/>
<circle cx="590.3" cy="293.3" r="16.9"/>
<circle cx="603" cy="291.2" r="18"/>
<circle cx="609.4" cy="280.6" r="16.9"/>
<circle cx="605.1" cy="272.1" r="14.8"/>
<circle cx="624.2" cy="287" r="13.3"/>
<path d="M187.1 52.6L193.9 75.1" stroke="#e6cf87" stroke-width="20.3" stroke-linecap="round"/>
<path d="M180.3 63.9L187.1 72.9" stroke="#e6cf87" stroke-width="11.3" stroke-linecap="round"/>
<path d="M193.9 75.1L200.6 97.7" stroke="#e6cf87" stroke-width="18.1" stroke-linecap="round"/>
<path d="M200.6 97.7L198.4 120.3" stroke="#e6cf87" stroke-width="22.6" stroke-linecap="round"/>
<path d="M227.7 45.8L230 66.1" stroke="#e6cf87" stroke-width="18.1" stroke-linecap="round"/>
<path d="M230 66.1L228.8 86.4" stroke="#e6cf87" stroke-width="10.2" stroke-linecap="round"/>
<path d="M228.8 86.4L235.6 109" stroke="#e6cf87" stroke-width="5.6" stroke-linecap="round"/>
<path d="M235.6 109L237.9 116.9" stroke="#e6cf87" stroke-width="3.2" stroke-linecap="round"/>
<path d="M259.3 54.8L257.1 75.1" stroke="#e6cf87" stroke-width="15.8" stroke-linecap="round"/>
<path d="M257.1 75.1L251.4 89.8" stroke="#e6cf87" stroke-width="9" stroke-linecap="round"/>
<path d="M266.1 63.9L270.6 66.1" stroke="#e6cf87" stroke-width="6.8" stroke-linecap="round"/>
<path d="M268.4 93.2L286.4 100" stroke="#e6cf87" stroke-width="13.5" stroke-linecap="round"/>
<path d="M266.1 97.7L263.8 113.5" stroke="#e6cf87" stroke-width="9" stroke-linecap="round"/>
<path d="M336.1 79.7L334.9 93.2" stroke="#e6cf87" stroke-width="13.5" stroke-linecap="round"/>
<path d="M385.7 43.5L367.7 61.6" stroke="#e6cf87" stroke-width="11.3" stroke-linecap="round"/>
<path d="M367.7 61.6L358.6 81.9" stroke="#e6cf87" stroke-width="11.3" stroke-linecap="round"/>
<path d="M358.6 81.9L354.1 115.8" stroke="#e6cf87" stroke-width="11.3" stroke-linecap="round"/>
<path d="M376.7 57.1L383.5 75.1" stroke="#e6cf87" stroke-width="11.3" stroke-linecap="round"/>
<path d="M383.5 75.1L383.5 104.5" stroke="#e6cf87" stroke-width="24.8" stroke-linecap="round"/>
<path d="M397 68.4L388 81.9" stroke="#e6cf87" stroke-width="9" stroke-linecap="round"/>
<path d="M406 95.5L420 97.7" stroke="#e6cf87" stroke-width="13.5" stroke-linecap="round"/>
<path d="M394.8 109L385.7 115.8" stroke="#e6cf87" stroke-width="6.8" stroke-linecap="round"/>
<path d="M367.7 68.4L369.9 75.1" stroke="#e6cf87" stroke-width="4.5" stroke-linecap="round"/>
<path d="M516.4 373.2L516.4 384.5" stroke="#e6cf87" stroke-width="4.1" stroke-linecap="round"/>
<path d="M502.7 457.3L505 464.1" stroke="#e6cf87" stroke-width="6.8" stroke-linecap="round"/>
<path d="M340 201L342 220" stroke="#e6cf87" stroke-width="4" stroke-linecap="round"/>
<path d="M536.2 221.2L537.3 236.1" stroke="#e6cf87" stroke-width="25.5" stroke-linecap="round"/>
<path d="M543.6 242.4L567 272.1" stroke="#e6cf87" stroke-width="25.5" stroke-linecap="round"/>
<path d="M609.8 208.5L615.7 231.8" stroke="#e6cf87" stroke-width="8.5" stroke-linecap="round"/>
<path d="M615.7 231.8L625.3 244.5" stroke="#e6cf87" stroke-width="10.6" stroke-linecap="round"/>
<path d="M588.2 306L588.2 316.6" stroke="#e6cf87" stroke-width="10.6" stroke-linecap="round"/>
<path d="M509.7 214.8L509.7 226.5" stroke="#e6cf87" stroke-width="3.8" stroke-linecap="round"/>
<path d="M508.6 248.8L512.9 270" stroke="#e6cf87" stroke-width="8.9" stroke-linecap="round"/>
<path d="M520.3 287L535.1 301.8" stroke="#e6cf87" stroke-width="19.1" stroke-linecap="round"/>
<path d="M535.1 301.8L552.1 316.6" stroke="#e6cf87" stroke-width="17" stroke-linecap="round"/>
<path d="M552.1 316.6L571.2 327.3" stroke="#e6cf87" stroke-width="10.6" stroke-linecap="round"/>
<path d="M571.2 327.3L586 333.6" stroke="#e6cf87" stroke-width="6.4" stroke-linecap="round"/>
<path d="M357.5 86.4L354.1 104.5" stroke="#e6cf87" stroke-width="15" stroke-linecap="round"/>
<path d="M528.8 295.4L541.5 308.2" stroke="#e6cf87" stroke-width="20.6" stroke-linecap="round"/>
<path d="M541.5 308.2L554.2 316.6" stroke="#e6cf87" stroke-width="17.4" stroke-linecap="round"/>
<path d="M381.2 92.1L379.4 103.4" stroke="#e6cf87" stroke-width="27.1" stroke-linecap="round"/>
</g></g>
<g mask="url(#mK)"><g fill="#e7bd89" filter="url(#goo)">
<circle cx="193.3" cy="126.7" r="8.3"/>
<circle cx="213.3" cy="128.3" r="3.3"/>
<circle cx="376.7" cy="6.7" r="6.7"/>
<circle cx="413.3" cy="130" r="10"/>
<circle cx="306.7" cy="165" r="4"/>
<circle cx="213.3" cy="211.7" r="5"/>
<circle cx="543.3" cy="56.7" r="11.7"/>
<circle cx="513.3" cy="60" r="6.7"/>
<circle cx="581.7" cy="131.7" r="6"/>
<circle cx="196.7" cy="240" r="16.7"/>
<circle cx="210" cy="253.3" r="8.3"/>
<circle cx="231.7" cy="263.3" r="5"/>
<circle cx="210" cy="320" r="6.7"/>
<circle cx="210" cy="333.3" r="5"/>
<circle cx="250" cy="316.7" r="11.7"/>
<circle cx="256.7" cy="326.7" r="8.3"/>
<circle cx="293.3" cy="400" r="13.3"/>
<circle cx="286.7" cy="386.7" r="8.3"/>
<circle cx="256.7" cy="430" r="15"/>
<circle cx="270" cy="406.7" r="6.7"/>
<circle cx="366.7" cy="393.3" r="10"/>
<circle cx="346.7" cy="383.3" r="6.7"/>
<circle cx="373.3" cy="420" r="11.7"/>
<circle cx="360" cy="410" r="8.3"/>
<circle cx="446.7" cy="386.7" r="16.7"/>
<circle cx="443.3" cy="363.3" r="10"/>
<circle cx="466.7" cy="366.7" r="8.3"/>
<circle cx="420" cy="376.7" r="6.7"/>
<circle cx="450" cy="410" r="8.3"/>
<circle cx="486.7" cy="313.3" r="2.7"/>
<circle cx="490" cy="363.3" r="5"/>
<circle cx="690" cy="243.3" r="11.7"/>
<circle cx="680" cy="310" r="16.7"/>
<circle cx="573.3" cy="363.3" r="13.3"/>
<circle cx="596.7" cy="360" r="10"/>
<circle cx="610" cy="370" r="10"/>
<circle cx="543.3" cy="433.3" r="15"/>
<circle cx="260" cy="473.3" r="26.7"/>
<circle cx="310" cy="490" r="26.7"/>
<circle cx="293.3" cy="523.3" r="20"/>
<circle cx="326.7" cy="540" r="33.3"/>
<circle cx="360" cy="590" r="40"/>
<circle cx="376.7" cy="523.3" r="20"/>
<circle cx="410" cy="540" r="20"/>
<circle cx="443.3" cy="540" r="30"/>
<circle cx="476.7" cy="506.7" r="26.7"/>
<circle cx="426.7" cy="506.7" r="13.3"/>
<circle cx="393.3" cy="466.7" r="13.3"/>
<circle cx="380" cy="446.7" r="16.7"/>
<circle cx="210" cy="450" r="13.3"/>
<circle cx="243.3" cy="480" r="16.7"/>
<circle cx="303.3" cy="586.7" r="13.3"/>
<circle cx="280" cy="630" r="23.3"/>
<circle cx="260" cy="616.7" r="13.3"/>
<circle cx="400" cy="633.3" r="20"/>
<circle cx="426.7" cy="590" r="16.7"/>
<circle cx="443.3" cy="580" r="13.3"/>
<circle cx="460" cy="556.7" r="16.7"/>
<circle cx="366.7" cy="483.3" r="6.7"/>
<circle cx="436.7" cy="646.7" r="6.7"/>
<circle cx="193.3" cy="476.7" r="5"/>
<circle cx="183.3" cy="476.7" r="5"/>
<circle cx="206.7" cy="530" r="3.3"/>
<circle cx="326.7" cy="626.7" r="13.3"/>
<circle cx="313.3" cy="646.7" r="6.7"/>
<circle cx="346.7" cy="646.7" r="10"/>
<circle cx="195" cy="566.7" r="5"/>
<circle cx="226.7" cy="490" r="20"/>
<circle cx="276.7" cy="506.7" r="20"/>
<circle cx="360" cy="506.7" r="20"/>
<circle cx="393.3" cy="556.7" r="26.7"/>
<circle cx="460" cy="590" r="20"/>
<circle cx="476.7" cy="550" r="20"/>
<circle cx="410" cy="590" r="20"/>
<circle cx="310" cy="606.7" r="16.7"/>
<circle cx="243.3" cy="460" r="13.3"/>
<circle cx="343.3" cy="456.7" r="16.7"/>
<circle cx="426.7" cy="460" r="16.7"/>
<circle cx="476.7" cy="460" r="16.7"/>
<circle cx="450" cy="483.3" r="10"/>
<circle cx="526.7" cy="460" r="13.3"/>
<circle cx="543.3" cy="450" r="6.7"/>
<circle cx="520" cy="533.3" r="36.7"/>
<circle cx="543.3" cy="513.3" r="23.3"/>
<circle cx="560" cy="523.3" r="13.3"/>
<circle cx="610" cy="518.3" r="6.7"/>
<circle cx="563.3" cy="566.7" r="5"/>
<circle cx="516.7" cy="570" r="10"/>
<circle cx="533.3" cy="580" r="6.7"/>
<circle cx="506.7" cy="480" r="13.3"/>
<circle cx="186" cy="63.9" r="6.3"/>
<circle cx="206.3" cy="76.3" r="4.1"/>
<circle cx="196.1" cy="90.9" r="3.6"/>
<circle cx="232.2" cy="53.7" r="5.6"/>
<circle cx="261.6" cy="71.8" r="5"/>
<circle cx="279.6" cy="96.6" r="4.1"/>
<circle cx="263.8" cy="109" r="3.2"/>
<circle cx="336.1" cy="87.6" r="5"/>
<circle cx="356.4" cy="95.5" r="4.1"/>
<circle cx="376.7" cy="45.8" r="4.1"/>
<circle cx="380.1" cy="95.5" r="10.2"/>
<circle cx="388" cy="81.9" r="4.5"/>
<circle cx="406" cy="96.6" r="2.7"/>
<circle cx="254.8" cy="43.5" r="5.6"/>
<circle cx="191.8" cy="583.7" r="3.8"/>
<circle cx="215.2" cy="583.7" r="4.2"/>
<circle cx="528.8" cy="230.8" r="3"/>
<circle cx="594.5" cy="270" r="21.2"/>
<circle cx="611.5" cy="263.6" r="19.1"/>
<circle cx="598.8" cy="289.1" r="14.8"/>
<circle cx="581.8" cy="280.6" r="12.7"/>
<circle cx="511.8" cy="268.9" r="2.5"/>
<circle cx="628.5" cy="284.8" r="6.4"/>
<circle cx="634.8" cy="289.1" r="4.2"/>
<circle cx="192.3" cy="127.7" r="7.8"/>
<circle cx="415" cy="130.7" r="12.8"/>
<circle cx="410" cy="136.7" r="9.2"/>
<circle cx="418.3" cy="123.3" r="8.5"/>
<circle cx="215" cy="212.7" r="7.2"/>
<circle cx="376.7" cy="3.3" r="8.5"/>
<circle cx="553.3" cy="53.3" r="9.2"/>
<circle cx="196.7" cy="240" r="13.8"/>
<circle cx="200" cy="230" r="9.5"/>
<circle cx="256.7" cy="326.7" r="7.8"/>
<circle cx="295" cy="393.3" r="7.5"/>
<circle cx="290" cy="405" r="7.5"/>
<circle cx="253.3" cy="433.3" r="11.8"/>
<circle cx="365" cy="390" r="9.2"/>
<circle cx="373.3" cy="420" r="9.8"/>
<circle cx="443.3" cy="360.7" r="8.5"/>
<circle cx="465" cy="365" r="7.8"/>
<circle cx="448.3" cy="391.7" r="9.8"/>
<circle cx="383.3" cy="438.3" r="7.8"/>
<circle cx="680" cy="310" r="14.5"/>
<circle cx="583.3" cy="368.3" r="8.5"/>
<circle cx="610" cy="366.7" r="10.5"/>
<circle cx="543.3" cy="433.3" r="11.8"/>
<circle cx="210" cy="448.3" r="11.8"/>
<circle cx="216.7" cy="455" r="8.5"/>
<circle cx="246.7" cy="443.3" r="12.8"/>
<circle cx="270" cy="468.3" r="16.2"/>
<circle cx="273.3" cy="480" r="11.2"/>
<circle cx="243.3" cy="481.7" r="14.5"/>
<circle cx="250" cy="480" r="11.2"/>
<circle cx="293.3" cy="486.7" r="14.5"/>
<circle cx="286.7" cy="493.3" r="11.2"/>
<circle cx="260" cy="501" r="8.5"/>
<circle cx="276.7" cy="518.3" r="8.5"/>
<circle cx="311.7" cy="540" r="11.8"/>
<circle cx="380" cy="445" r="14.5"/>
<circle cx="386.7" cy="538.3" r="7.8"/>
<circle cx="405" cy="525" r="8.5"/>
<circle cx="436.7" cy="505" r="11.8"/>
<circle cx="441.7" cy="525" r="10.5"/>
<circle cx="480" cy="486.7" r="17.8"/>
<circle cx="483.3" cy="503.3" r="12.8"/>
<circle cx="480" cy="516.7" r="9.5"/>
<circle cx="440" cy="550" r="19.5"/>
<circle cx="446.7" cy="560" r="12.8"/>
<circle cx="473.3" cy="543.3" r="12.8"/>
<circle cx="478.3" cy="553.3" r="9.5"/>
<circle cx="496.7" cy="533.3" r="9.5"/>
<circle cx="430" cy="590" r="12.8"/>
<circle cx="323.3" cy="476.7" r="14.5"/>
<circle cx="333.3" cy="500" r="21.2"/>
<circle cx="340" cy="523.3" r="24.5"/>
<circle cx="353.3" cy="536.7" r="17.8"/>
<circle cx="346.7" cy="556.7" r="21.2"/>
<circle cx="360" cy="560" r="17.8"/>
<circle cx="366.7" cy="553.3" r="14.5"/>
<circle cx="343.3" cy="583.3" r="21.2"/>
<circle cx="353.3" cy="600" r="27.8"/>
<circle cx="336.7" cy="596.7" r="17.8"/>
<circle cx="373.3" cy="616.7" r="24.5"/>
<circle cx="393.3" cy="620" r="21.2"/>
<circle cx="406.7" cy="618.3" r="14.5"/>
<circle cx="376.7" cy="640" r="17.8"/>
<circle cx="373.3" cy="653.3" r="14.5"/>
<circle cx="366.7" cy="586.7" r="14.5"/>
<circle cx="280" cy="626.7" r="19.5"/>
<circle cx="286.7" cy="640" r="17.8"/>
<circle cx="270" cy="623.3" r="12.8"/>
<circle cx="533.3" cy="513.3" r="21.2"/>
<circle cx="553.3" cy="516.7" r="17.8"/>
<circle cx="513.3" cy="533.3" r="21.2"/>
<circle cx="513.3" cy="550" r="12.8"/>
<circle cx="506.7" cy="503.3" r="12.8"/>
<circle cx="560" cy="523.3" r="12.8"/>
<circle cx="540" cy="440" r="9.5"/>
<circle cx="261.6" cy="72.4" r="7.2"/>
<circle cx="579.7" cy="287" r="10.9"/>
<circle cx="590.3" cy="293.3" r="11.9"/>
<circle cx="603" cy="291.2" r="13"/>
<circle cx="609.4" cy="280.6" r="11.9"/>
<circle cx="605.1" cy="272.1" r="9.8"/>
<circle cx="624.2" cy="287" r="8.3"/>
<path d="M357.5 86.4L354.1 104.5" stroke="#e7bd89" stroke-width="5" stroke-linecap="round"/>
<path d="M528.8 295.4L541.5 308.2" stroke="#e7bd89" stroke-width="10.6" stroke-linecap="round"/>
<path d="M541.5 308.2L554.2 316.6" stroke="#e7bd89" stroke-width="7.4" stroke-linecap="round"/>
<path d="M381.2 92.1L379.4 103.4" stroke="#e7bd89" stroke-width="17.1" stroke-linecap="round"/>
</g></g>
<g fill="#dc8174" filter="url(#goo)">
<circle cx="192.3" cy="127.7" r="3.3"/>
<circle cx="415" cy="130.7" r="8.3"/>
<circle cx="410" cy="136.7" r="4.7"/>
<circle cx="418.3" cy="123.3" r="4"/>
<circle cx="215" cy="212.7" r="2.7"/>
<circle cx="376.7" cy="3.3" r="4"/>
<circle cx="553.3" cy="53.3" r="4.7"/>
<circle cx="196.7" cy="240" r="9.3"/>
<circle cx="200" cy="230" r="5"/>
<circle cx="256.7" cy="326.7" r="3.3"/>
<circle cx="295" cy="393.3" r="3"/>
<circle cx="290" cy="405" r="3"/>
<circle cx="253.3" cy="433.3" r="7.3"/>
<circle cx="365" cy="390" r="4.7"/>
<circle cx="373.3" cy="420" r="5.3"/>
<circle cx="443.3" cy="360.7" r="4"/>
<circle cx="465" cy="365" r="3.3"/>
<circle cx="448.3" cy="391.7" r="5.3"/>
<circle cx="383.3" cy="438.3" r="3.3"/>
<circle cx="680" cy="310" r="10"/>
<circle cx="583.3" cy="368.3" r="4"/>
<circle cx="610" cy="366.7" r="6"/>
<circle cx="543.3" cy="433.3" r="7.3"/>
<circle cx="210" cy="448.3" r="7.3"/>
<circle cx="216.7" cy="455" r="4"/>
<circle cx="246.7" cy="443.3" r="8.3"/>
<circle cx="270" cy="468.3" r="11.7"/>
<circle cx="273.3" cy="480" r="6.7"/>
<circle cx="243.3" cy="481.7" r="10"/>
<circle cx="250" cy="480" r="6.7"/>
<circle cx="293.3" cy="486.7" r="10"/>
<circle cx="286.7" cy="493.3" r="6.7"/>
<circle cx="260" cy="501" r="4"/>
<circle cx="276.7" cy="518.3" r="4"/>
<circle cx="311.7" cy="540" r="7.3"/>
<circle cx="380" cy="445" r="10"/>
<circle cx="386.7" cy="538.3" r="3.3"/>
<circle cx="405" cy="525" r="4"/>
<circle cx="436.7" cy="505" r="7.3"/>
<circle cx="441.7" cy="525" r="6"/>
<circle cx="480" cy="486.7" r="13.3"/>
<circle cx="483.3" cy="503.3" r="8.3"/>
<circle cx="480" cy="516.7" r="5"/>
<circle cx="440" cy="550" r="15"/>
<circle cx="446.7" cy="560" r="8.3"/>
<circle cx="473.3" cy="543.3" r="8.3"/>
<circle cx="478.3" cy="553.3" r="5"/>
<circle cx="496.7" cy="533.3" r="5"/>
<circle cx="430" cy="590" r="8.3"/>
<circle cx="323.3" cy="476.7" r="10"/>
<circle cx="333.3" cy="500" r="16.7"/>
<circle cx="340" cy="523.3" r="20"/>
<circle cx="353.3" cy="536.7" r="13.3"/>
<circle cx="346.7" cy="556.7" r="16.7"/>
<circle cx="360" cy="560" r="13.3"/>
<circle cx="366.7" cy="553.3" r="10"/>
<circle cx="343.3" cy="583.3" r="16.7"/>
<circle cx="353.3" cy="600" r="23.3"/>
<circle cx="336.7" cy="596.7" r="13.3"/>
<circle cx="373.3" cy="616.7" r="20"/>
<circle cx="393.3" cy="620" r="16.7"/>
<circle cx="406.7" cy="618.3" r="10"/>
<circle cx="376.7" cy="640" r="13.3"/>
<circle cx="373.3" cy="653.3" r="10"/>
<circle cx="366.7" cy="586.7" r="10"/>
<circle cx="280" cy="626.7" r="15"/>
<circle cx="286.7" cy="640" r="13.3"/>
<circle cx="270" cy="623.3" r="8.3"/>
<circle cx="533.3" cy="513.3" r="16.7"/>
<circle cx="553.3" cy="516.7" r="13.3"/>
<circle cx="513.3" cy="533.3" r="16.7"/>
<circle cx="513.3" cy="550" r="8.3"/>
<circle cx="506.7" cy="503.3" r="8.3"/>
<circle cx="560" cy="523.3" r="8.3"/>
<circle cx="540" cy="440" r="5"/>
<circle cx="261.6" cy="72.4" r="2.7"/>
<circle cx="579.7" cy="287" r="6.4"/>
<circle cx="590.3" cy="293.3" r="7.4"/>
<circle cx="603" cy="291.2" r="8.5"/>
<circle cx="609.4" cy="280.6" r="7.4"/>
<circle cx="605.1" cy="272.1" r="5.3"/>
<circle cx="624.2" cy="287" r="3.8"/>
<path d="M381.2 92.1L379.4 103.4" stroke="#dc8174" stroke-width="8.1" stroke-linecap="round"/>
</g>
<g fill="none" stroke="#fff" stroke-width="0.8" stroke-opacity=".6" stroke-linejoin="round">
<path d="M371 199C372.5 190.8 378 166.5 380 150C382 133.5 383.3 115 383 100C382.7 85 379.8 73.3 378 60C376.2 46.7 373.7 30 372 20C370.3 10 368.7 3.3 368 0"/>
<path d="M371 199C365.8 196.7 351.8 190.7 340 185C328.2 179.3 310.8 172.5 300 165C289.2 157.5 282.2 149.2 275 140C267.8 130.8 260 121.7 257 110C254 98.3 257 76.7 257 70"/>
<path d="M371 199C364.2 198.8 345.2 197.8 330 198C314.8 198.2 296.7 197.7 280 200C263.3 202.3 243.3 210.7 230 212C216.7 213.3 205 208.7 200 208"/>
<path d="M371 199C375.8 198.7 388.5 197.2 400 197C411.5 196.8 426.2 197 440 198C453.8 199 470 201.2 483 203C496 204.8 512.2 208 518 209"/>
<path d="M371 199C370.5 205.8 369.2 225.8 368 240C366.8 254.2 364.7 276.7 364 284"/>
<path d="M364 284C358.3 286.7 340.7 298 330 300C319.3 302 308.5 297.2 300 296C291.5 294.8 287.3 294 279 293C270.7 292 259.8 292.2 250 290C240.2 287.8 229.2 283 220 280C210.8 277 199.2 273.3 195 272"/>
<path d="M364 284C363.7 293.3 362.3 320.7 362 340C361.7 359.3 361.3 379.2 362 400C362.7 420.8 365.3 454.2 366 465"/>
<path d="M364 284C370 285.8 387.3 290.7 400 295C412.7 299.3 426.7 304.2 440 310C453.3 315.8 466.7 324.2 480 330C493.3 335.8 506.7 341.3 520 345C533.3 348.7 546.7 349.8 560 352C573.3 354.2 593.3 357 600 358"/>
<path d="M520 276C511.7 273.7 486.7 268 470 262C453.3 256 434.2 247.8 420 240C405.8 232.2 393.2 221.8 385 215C376.8 208.2 373.3 201.7 371 199"/>
<path d="M520 276C524.2 280 535.8 291 545 300C554.2 309 565.8 320.3 575 330C584.2 339.7 595.8 353.3 600 358"/>
<path d="M518 209C518.3 214.2 519.7 228.8 520 240C520.3 251.2 520 270 520 276"/>
<path d="M518 209C520 199.2 525.5 168.2 530 150C534.5 131.8 540 116.7 545 100C550 83.3 555 65 560 50C565 35 572.5 16.7 575 10"/>
<path d="M366 465C371.7 463.3 387.7 462.5 400 455C412.3 447.5 426.7 430.8 440 420C453.3 409.2 463.3 398.3 480 390C496.7 381.7 520 375.3 540 370C560 364.7 590 360 600 358"/>
<path d="M366 465C366.7 470.8 364.3 489.2 370 500C375.7 510.8 390 520 400 530C410 540 421.3 552.2 430 560C438.7 567.8 448.3 574.2 452 577"/>
<path d="M452 577C456.7 570.8 470.3 552.8 480 540C489.7 527.2 498.3 510 510 500C521.7 490 537.5 479.5 550 480C562.5 480.5 579.2 499.2 585 503"/>
<path d="M452 577C443.3 579.2 417 586.2 400 590C383 593.8 366.7 598.3 350 600C333.3 601.7 316.7 600.8 300 600C283.3 599.2 265.7 596.5 250 595C234.3 593.5 213.3 591.7 206 591"/>
<path d="M600 358C599.7 365 599.7 384.7 598 400C596.3 415.3 592.2 432.8 590 450C587.8 467.2 585.8 494.2 585 503"/>
<path d="M585 503C590.8 505.8 608.8 514 620 520C631.2 526 646.7 535.8 652 539"/>
<path d="M600 358C605 365 622.5 384.7 630 400C637.5 415.3 641.7 433.3 645 450C648.3 466.7 648.8 485.2 650 500C651.2 514.8 651.7 532.5 652 539"/>
<path d="M206 591C207.5 582.5 211 555.2 215 540C219 524.8 225.8 511.7 230 500C234.2 488.3 238.3 475 240 470"/>
<path d="M710 376C708.3 368.3 702.3 343.2 700 330C697.7 316.8 695.2 310.3 696 297C696.8 283.7 701 264.5 705 250C709 235.5 714.7 222.8 720 210C725.3 197.2 734.2 179.2 737 173"/>
<path d="M710 376C715 374.2 726.8 368.7 740 365C753.2 361.3 780.8 355.8 789 354"/>
<path d="M710 376C705 373.3 690 365.2 680 360C670 354.8 659.8 350.2 650 345C640.2 339.8 625.8 331.7 621 329"/>
<path d="M696 297C703.3 294.2 723.3 288.5 740 280C756.7 271.5 786.7 251.7 796 246"/>
<path d="M796 246C801.7 241.7 817 225 830 220C843 215 866.7 216.7 874 216"/>
<path d="M737 173C742.5 169.2 757.7 160 770 150C782.3 140 804.2 119.2 811 113"/>
<path d="M811 113C817.5 114.2 836.8 117.5 850 120C863.2 122.5 878.2 126.2 890 128C901.8 129.8 915.8 130.5 921 131"/>
<path d="M921 131C921.2 127.5 921.8 117.2 922 110C922.2 102.8 922 91.7 922 88"/>
<path d="M811 113C815.8 107.5 830 91.5 840 80C850 68.5 865.8 50 871 44"/>
<path d="M871 44C875.8 48.3 891.5 62.7 900 70C908.5 77.3 918.3 85 922 88"/>
<path d="M921 131C925.8 127.5 941 117.7 950 110C959 102.3 966.8 92.7 975 85C983.2 77.3 995 67.5 999 64"/>
<path d="M874 216C876.7 210 884.8 191 890 180C895.2 169 899.8 158.2 905 150C910.2 141.8 918.3 134.2 921 131"/>
<path d="M799 195C800.8 187.5 808 163.7 810 150C812 136.3 810.8 119.2 811 113"/>
<path d="M799 195C805.8 196.7 827.5 201.5 840 205C852.5 208.5 868.3 214.2 874 216"/>
<path d="M635 197C635.8 205.8 641.7 234.5 640 250C638.3 265.5 628.2 276.8 625 290C621.8 303.2 621.7 322.5 621 329"/>
<path d="M635 197C644.2 195 673 189 690 185C707 181 729.2 175 737 173"/>
<path d="M650 142C648.3 146.7 642.5 160.8 640 170C637.5 179.2 635.8 192.5 635 197"/>
<path d="M279 293C277.5 299.2 269.8 315.5 270 330C270.2 344.5 275 363.3 280 380C285 396.7 291.7 416.7 300 430C308.3 443.3 319 454.2 330 460C341 465.8 360 464.2 366 465"/>
<path d="M195 272C194.2 266.7 191 251.2 190 240C189 228.8 189.2 210.8 189 205"/>
<path d="M195 272C195.2 280 196 305.3 196 320C196 334.7 195.2 353.3 195 360"/>
</g>
<g fill="none" stroke="#9a9a9a" stroke-width="0.8">
<path d="M735 38C734.2 38.8 732.8 40.2 730 43C727.2 45.8 723 50 718 55C713 60 705.2 66.7 700 73C694.8 79.3 692.5 85.7 687 93C681.5 100.3 672.7 110.3 667 117C661.3 123.7 657.5 127.5 653 133C648.5 138.5 642.7 145.5 640 150C637.3 154.5 637.5 158.3 637 160"/>
<path d="M667 117C669.2 119.7 675 128 680 133C685 138 692 142 697 147C702 152 706.2 157.2 710 163C713.8 168.8 715.8 178.5 720 182C724.2 185.5 730.5 183.2 735 184C739.5 184.8 741.7 184.3 747 187C752.3 189.7 760.3 195 767 200C773.7 205 781.5 212.7 787 217C792.5 221.3 794.5 222.2 800 226C805.5 229.8 814.2 235.7 820 240C825.8 244.3 830.7 248.3 835 252C839.3 255.7 844.2 260.3 846 262"/>
<path d="M635 197C634.5 198.3 633.2 201.2 632 205C630.8 208.8 629 213.3 628 220C627 226.7 626.2 237.5 626 245C625.8 252.5 627.7 259.5 627 265C626.3 270.5 624 274.8 622 278C620 281.2 616.2 283 615 284"/>
<path d="M846 262C844.7 263.3 840.7 265.3 838 270C835.3 274.7 832.2 284.2 830 290C827.8 295.8 825.3 300.3 825 305C824.7 309.7 827.5 315.8 828 318"/>
</g>
<g fill="#5f8fa1">
<path d="M1043 -5 L1039 8 L1035 26 L1030 43 L1025 53 L1020 61 L1010 69 L1000 76.5 L992 85 L985 93 L978 104 L971 116 L966 128 L962 140 L957.5 155 L952 164 L945.5 173 L938 184 L930 194.5 L921 204 L912 212.7 L905 218 L899 222 L892 226 L882 231 L878 238 L874.5 245.5 L872 253 L871 260 L869 267 L866.5 272.7 L860.7 281.8 L849.8 296.4 L838.2 311 L828 323.6 L820 334.5 L810 350 L800 358 L792 363 L780 370 L767 375 L753 372 L743 369 L727 366 L715 369 L707 370 L697 366 L687 360 L673 354 L660 352 L643 353 L633 350 L627 347 L620 340 L616 330 L614 318 L613 303 L617 318 L619 332 L616 343 L622 352 L633 366 L650 380 L660 390 L667 398 L671 410 L668 420 L663 428 L661 436 L665 443 L673 448 L688 451 L691 465 L690 480 L683 494 L673 507 L665 517 L657 527 L652 538 L646 548 L637 555 L627 561 L614 567 L600 572 L584 577 L567 581 L550 584 L533 588 L516 591 L500 594 L480 592 L462 588 L452 583 L448 589 L453 600 L452 613 L455 628 L453 640 L451 652 L450 665 L1160 665 L1160 -5Z"/>
<path d="M406 146C406 145 409.7 150.3 412 151C414.3 151.7 417.3 150.8 420 150C422.7 149.2 425.3 147.2 428 146C430.7 144.8 433.2 144 436 143C438.8 142 442.2 140.7 445 140C447.8 139.3 451.2 137.7 453 139C454.8 140.3 455.5 144.5 456 148C456.5 151.5 456.2 156.3 456 160C455.8 163.7 456.3 168 455 170C453.7 172 450.5 171.7 448 172C445.5 172.3 442.7 171.3 440 172C437.3 172.7 434 175.5 432 176C430 176.5 429.3 176.7 428 175C426.7 173.3 425.7 168.3 424 166C422.3 163.7 420 162.5 418 161C416 159.5 414 159.5 412 157C410 154.5 406 147 406 146Z"/>
<path d="M917.5 132C918.2 132.8 917.7 141 919 143.6C920.3 146.2 923.5 146.7 925.5 147.3C927.5 148 929.2 147.8 931 147.5C932.8 147.2 934.7 146.6 936.4 145.5C938.1 144.4 939.5 142.2 941 141C942.5 139.8 944.1 138.4 945.5 138.2C946.9 138 948.9 138.7 949.5 140C950.1 141.3 949.7 143.6 949 146C948.3 148.4 946.4 151.9 945.5 154.5C944.6 157.1 944.5 159.6 943.6 161.8C942.7 164.1 941.2 166.2 940 168C938.8 169.8 938.2 170.4 936.4 172.7C934.6 175 931.1 178.8 929 181.8C926.9 184.8 925.7 187.9 923.6 190.9C921.5 193.9 918.5 197.3 916.4 200C914.3 202.7 912.6 205.3 910.9 207.3C909.2 209.3 907.5 210.8 906 212C904.5 213.2 903.5 213.8 901.8 214.5C900.1 215.2 897.8 216.3 896 216.5C894.2 216.7 892.4 216.3 890.9 215.6C889.4 214.8 887.7 213.6 887 212C886.3 210.4 886.2 208.3 886.5 206C886.8 203.7 887.9 200.3 889 198.2C890.1 196.1 891.5 194.7 893 193.5C894.5 192.3 896.1 192.8 898.2 190.9C900.3 189 903.4 184.8 905.5 181.8C907.6 178.8 909.5 175.7 910.9 172.7C912.3 169.7 912.9 166.4 913.8 163.6C914.7 160.8 916.3 158.6 916.5 156C916.7 153.4 915.3 150.8 915 148C914.7 145.2 914.1 141.7 914.5 139C914.9 136.3 916.8 131.2 917.5 132Z"/>
<path d="M858.2 236.4C859.1 236.9 860.4 240.9 861 243C861.6 245.1 862 246.5 861.8 249C861.6 251.5 861.5 255.4 860 258.2C858.5 260.9 855.4 263.4 852.7 265.5C850 267.6 846.3 269.5 843.6 271C840.9 272.5 838.8 272.7 836.4 274.5C834 276.3 830.6 278.8 829 281.8C827.4 284.8 827.1 288.9 826.5 292.7C825.9 296.5 826.4 302.4 825.5 304.4C824.6 306.3 821.9 306.3 821 304.4C820.1 302.4 820 296.8 820 292.7C820 288.6 819.5 283.6 821 280C822.5 276.4 826.1 273.7 829 271C831.9 268.3 835.5 266 838.2 263.6C841 261.2 843.4 259.1 845.5 256.4C847.6 253.7 849.3 250 851 247.3C852.7 244.6 854.4 241.8 855.6 240C856.8 238.2 857.3 235.9 858.2 236.4Z"/>
<path d="M863.4 268C864.2 267.6 865.8 267.3 864.8 270.2C863.8 273.1 860 280.8 857.2 285.5C854.4 290.2 850.6 295.3 848 298.2C845.4 301.1 842.9 302.5 841.5 303C840.1 303.5 838.9 302.4 839.7 301C840.5 299.6 843.8 297.7 846.3 294.5C848.8 291.3 852.4 285.4 854.6 281.8C856.8 278.2 858.2 275 859.7 272.7C861.2 270.4 862.5 268.4 863.4 268Z"/>
<path d="M614 284C615 282.3 617.5 285.3 618 288C618.5 290.7 617.5 296 617 300C616.5 304 615.2 308.3 615 312C614.8 315.7 616.5 320.3 616 322C615.5 323.7 612.8 324 612 322C611.2 320 611 314 611 310C611 306 611.5 302.3 612 298C612.5 293.7 613 285.7 614 284Z"/>
<path d="M637 160C637.7 158.8 640.5 162.5 641 165C641.5 167.5 639.5 173 640 175C640.5 177 643.8 175.5 644 177C644.2 178.5 642.2 181.5 641 184C639.8 186.5 638.3 191.2 637 192C635.7 192.8 633.2 190.7 633 189C632.8 187.3 636 184.2 636 182C636 179.8 632.8 177.7 633 176C633.2 174.3 636.3 174.7 637 172C637.7 169.3 636.3 161.2 637 160Z"/>
<path d="M707 259C707.8 257.7 710.8 256.3 713 256C715.2 255.7 717.8 256.2 720 257C722.2 257.8 725.7 259.8 726 261C726.3 262.2 723.7 263.8 722 264C720.3 264.2 717.7 261.7 716 262C714.3 262.3 713.3 265.7 712 266C710.7 266.3 708.8 265.2 708 264C707.2 262.8 706.2 260.3 707 259Z"/>
<path d="M167 565C168.2 563.3 172.3 562.5 175 563C177.7 563.5 180.7 566.3 183 568C185.3 569.7 188.5 571.7 189 573C189.5 574.3 188 576 186 576C184 576 180 573.5 177 573C174 572.5 169.7 574.3 168 573C166.3 571.7 165.8 566.7 167 565Z"/>
<path d="M167 610C168.5 607.7 174.2 607.3 176 608C177.8 608.7 178.7 612 178 614C177.3 616 173.8 618.7 172 620C170.2 621.3 167.8 623.7 167 622C166.2 620.3 165.5 612.3 167 610Z"/>
<path d="M222 551C223.3 550 228.5 550.8 232 550C235.5 549.2 241.5 545.8 243 546C244.5 546.2 242.7 549.5 241 551C239.3 552.5 235.8 554.2 233 555C230.2 555.8 225.8 556.7 224 556C222.2 555.3 220.7 552 222 551Z"/>
<path d="M246 507C246.8 505.8 250.3 504.5 252 505C253.7 505.5 256 508.5 256 510C256 511.5 253.5 513.7 252 514C250.5 514.3 248 513.2 247 512C246 510.8 245.2 508.2 246 507Z"/>
<path d="M286 549C286.7 547.7 291.7 546.5 293 547C294.3 547.5 294.7 550.7 294 552C293.3 553.3 290.3 555.5 289 555C287.7 554.5 285.3 550.3 286 549Z"/>
<path d="M424 491C425.2 489.8 429.3 489 432 488C434.7 487 436.7 486.3 440 485C443.3 483.7 448.2 481.5 452 480C455.8 478.5 461 476.2 463 476C465 475.8 465.8 477.7 464 479C462.2 480.3 455.8 482.3 452 484C448.2 485.7 444.7 487.3 441 489C437.3 490.7 432.7 493 430 494C427.3 495 426 495.5 425 495C424 494.5 422.8 492.2 424 491Z"/>
<path d="M447 346C448.3 344.7 452.5 342.7 454 343C455.5 343.3 456.5 346.3 456 348C455.5 349.7 452.7 352.5 451 353C449.3 353.5 446.7 352.2 446 351C445.3 349.8 445.7 347.3 447 346Z"/>
<path d="M440 429C440.5 427.5 444.7 426.3 446 427C447.3 427.7 448.5 431.5 448 433C447.5 434.5 444.3 436.7 443 436C441.7 435.3 439.5 430.5 440 429Z"/>
<path d="M440 630C440.5 628.5 444.7 627.3 446 628C447.3 628.7 448.5 632.5 448 634C447.5 635.5 444.3 637.7 443 637C441.7 636.3 439.5 631.5 440 630Z"/>
<path d="M690 4C691 2.5 696.3 1 700 0C703.7 -1 710 -2.7 712 -2C714 -1.3 713.7 2.5 712 4C710.3 5.5 705 6.2 702 7C699 7.8 696 9.5 694 9C692 8.5 689 5.5 690 4Z"/>
<path d="M540 261C541 259.7 544.3 259.5 546 260C547.7 260.5 549.5 262.3 550 264C550.5 265.7 550 268.7 549 270C548 271.3 545.5 272.3 544 272C542.5 271.7 540.7 269.8 540 268C539.3 266.2 539 262.3 540 261Z"/>
<path d="M528.5 255C528.8 254.1 531.2 254 532 254.5C532.8 255 533.8 257.1 533.5 258C533.2 258.9 530.8 260.5 530 260C529.2 259.5 528.2 255.9 528.5 255Z"/>
<path d="M509 229C509.7 227.9 513 227.7 514 228.5C515 229.3 515.7 232.9 515 234C514.3 235.1 511 235.8 510 235C509 234.2 508.3 230.1 509 229Z"/>
<path d="M483.5 312C484.1 311.1 487.1 310.8 488 311.5C488.9 312.2 489.6 315.1 489 316C488.4 316.9 485.4 317.7 484.5 317C483.6 316.3 482.9 312.9 483.5 312Z"/>
</g>
<g font-family="'Liberation Sans',sans-serif" text-anchor="middle" paint-order="stroke" stroke="#f4f4f4" stroke-opacity=".8" stroke-width="2" stroke-linejoin="round">
<g font-size="12" font-weight="bold" fill="#6a6a6a">
<text x="257" y="105.3">La Rioja</text>
<text x="371" y="204.3">Cordoba</text>
<text x="184.5" y="210.3">San Juan</text>
<text x="174" y="277.3">Mendoza</text>
<text x="281" y="299.3">San Luis</text>
<text x="364" y="289.3">Río Cuarto</text>
<text x="195" y="365.3">San Rafael</text>
<text x="518" y="214.3">Santa Fe</text>
<text x="520" y="281.3">Rosario</text>
<text x="612" y="284.3">Gualeguaychu</text>
<text x="621" y="334.3">Carmelo</text>
<text x="615" y="365.3">Buenos Aires</text>
<text x="710" y="381.3">Montevideo</text>
<text x="696" y="302.3">Durazno</text>
<text x="796" y="251.3">Melo</text>
<text x="789" y="359.3">Rocha</text>
<text x="650" y="147.3">Bella Unión</text>
<text x="635" y="202.3">Salto</text>
<text x="737" y="178.3">Rivera</text>
<text x="799" y="200.3">Bagé</text>
<text x="811" y="118.3">Santa Maria</text>
<text x="874" y="221.3">Pelotas</text>
<text x="921" y="136.3">Porto Alegre</text>
<text x="922" y="93.3">Caxias do Sul</text>
<text x="999" y="69.3">Criciúma</text>
<text x="871" y="49.3">Passo Fundo</text>
<text x="592" y="10.3">Resistencia</text>
<text x="724" y="7.3">Posadas</text>
<text x="366" y="27.3">Santiago del Estero</text>
<text x="366" y="470.3">Santa Rosa</text>
<text x="585" y="508.3">Tandil</text>
<text x="652" y="544.3">Mar del Plata</text>
<text x="602" y="574.3">Necochea</text>
<text x="452" y="582.3">Bahía Blanca</text>
<text x="206" y="596.3">Neuquén</text>
</g><g font-size="15.5" fill="#7c7c7c">
<text x="378" y="406.2">Argentina</text>
<text x="717" y="275.2">Uruguay</text>
</g></g>
</svg>

<div id="side">
 <svg style="left:13px;top:9px" width="26" height="26" viewBox="0 0 26 26">
  <polygon points="18.8,2 22.3,24.8 .5,17" fill="#3ecf8e"/>
  <circle cx="8.4" cy="9.8" r="3.5" fill="#e9e04a"/>
  <circle cx="20" cy="13.6" r="3.3" fill="#b5d44c"/>
  <circle cx="11.7" cy="21" r="3.5" fill="#f5a623"/>
 </svg>
 <div id="lg" style="position:absolute;left:43.3px;top:15px;line-height:16px;color:#3ecf8e;font-weight:bold;font-size:9px;white-space:nowrap;transform-origin:0 50%;transform:scaleX(.888)"><span style="font-size:11.2px">G</span>REEN<span style="font-size:11.2px">T</span>RIANGLE</div>
 <svg style="left:139px;top:17px" width="13" height="11" viewBox="0 0 13 11"><path d="M.3 1.7H12.7M.3 5.8H12.7M.3 9.9H12.7" stroke="#e8e8e8" stroke-width="1.1"/></svg>

 <svg style="left:14px;top:76.2px" width="12" height="12" viewBox="0 0 13 13" fill="none" stroke="#eee" stroke-width="1"><rect x=".5" y=".5" width="12" height="12" rx="1.5"/><path d="M3.5 10V6M6 10V3.5M8.5 10V7.5M2.5 10.5H10.5"/></svg>
 <div class="row" style="top:74px"><span style="letter-spacing:-0.111px">Dashboard</span></div>
 <div class="hr" style="top:97px"></div>

 <svg style="left:14px;top:107.3px" width="12" height="12" viewBox="0 0 13 13" fill="none" stroke="#eee" stroke-width="1"><circle cx="6.5" cy="6.5" r="5.8"/><path d="M2.5 2.5C4 4 5.5 3 6 4.5S4 6.5 5 8.5S7.5 10 7 12M8.5 1C8 3 10 3.5 10.5 5S12 6 12.3 6.5"/></svg>
 <div class="row" style="top:105px"><span style="letter-spacing:-0.086px">Remote sensing</span></div>
 <svg style="left:147px;top:110px" width="10" height="6" viewBox="0 0 10 6"><path d="M.8 5.2L5 1L9.2 5.2" fill="none" stroke="#cfcfcf" stroke-width="1"/></svg>

 <div class="row" style="top:128px"><span style="letter-spacing:-0.500px">Base</span></div>
 <div class="row" style="top:145px"><span style="letter-spacing:0.111px">Satellite</span></div>
 <div class="row" style="top:168px"><span style="letter-spacing:0.126px">Intra Field Variability</span></div>
 <div class="row" style="top:185px"><span style="letter-spacing:-0.088px">Field Comparison</span></div>
 <div class="row" style="top:202px"><span style="letter-spacing:0.052px">Soil Moisture Anomaly</span></div>
 <div class="row sel" style="top:219px"><span style="letter-spacing:0.156px">Vegetation Anomaly</span></div>
 <div class="row" style="top:236px"><span style="letter-spacing:-0.141px">Frost &amp; Heat Risk</span></div>
 <div class="row" style="top:253px"><span style="letter-spacing:0.025px">Hail</span></div>
 <div class="row" style="top:277px"><span style="letter-spacing:0.147px">Crop Monitoring</span></div>
 <div class="hr" style="top:305px"></div>

 <svg style="left:14px;top:315.5px" width="12" height="10" viewBox="0 0 13 11"><path d="M3.5 1.5H13M3.5 5.5H13M3.5 9.5H13M0 1.5H2M0 5.5H2M0 9.5H2" stroke="#eee" stroke-width="1.1"/></svg>
 <div class="row" style="top:312px"><span style="letter-spacing:0.260px">Portfolios</span></div>
 <svg style="left:147px;top:317px" width="10" height="6" viewBox="0 0 10 6"><path d="M.8 5.2L5 1L9.2 5.2" fill="none" stroke="#cfcfcf" stroke-width="1"/></svg>
 <div class="hr" style="top:336px"></div>

 <div class="hr" style="top:626px"></div>
 <svg style="left:14px;top:635.5px" width="13" height="13" viewBox="0 0 13 13" fill="none" stroke="#e6d92a" stroke-width="1" stroke-linejoin="round" stroke-linecap="round"><path d="M12.3 .7C9 .5 6 2 3.8 5.5L7.5 9.2C11 7 12.5 4 12.3 .7Z"/><circle cx="8.8" cy="4.2" r="1.3"/><path d="M4.6 4.6L1.6 5.2L.6 7.2L3.2 6.8M8.4 8.4L7.8 11.4L5.8 12.4L6.2 9.8M3.7 9.3L1.3 11.7"/></svg>
 <div class="row" style="top:634px"><span style="letter-spacing:0.043px">Support</span></div>
</div>
<div class="pill" style="left:187px;width:222px"><svg style="left:11px;top:9px" width="14" height="14" viewBox="0 0 14 14" fill="none" stroke="#9a9a9a" stroke-width="1.1"><circle cx="5.6" cy="5.6" r="4.6"/><path d="M9 9L13 13"/></svg><span style="left:31px;color:#8d8d8d;letter-spacing:-.4px">Search</span></div>
<div class="pill" style="left:439px;width:639px"><span style="left:14.4px;letter-spacing:0.112px">Contract</span><svg style="left:72px;top:13px" width="10" height="7" viewBox="0 0 10 7"><path d="M.5 1L5 5.6L9.5 1" fill="none" stroke="#868686" stroke-width="1"/></svg><span style="left:108.2px;letter-spacing:-0.4px">Farm</span><svg style="left:146px;top:13px" width="10" height="7" viewBox="0 0 10 7"><path d="M.5 1L5 5.6L9.5 1" fill="none" stroke="#868686" stroke-width="1"/></svg><span style="left:182.2px;letter-spacing:-0.033px">Harvest year</span><svg style="left:261px;top:13px" width="10" height="7" viewBox="0 0 10 7"><path d="M.5 1L5 5.6L9.5 1" fill="none" stroke="#868686" stroke-width="1"/></svg><span style="left:297.2px;letter-spacing:-0.467px">Season</span><svg style="left:345.5px;top:13px" width="10" height="7" viewBox="0 0 10 7"><path d="M.5 1L5 5.6L9.5 1" fill="none" stroke="#868686" stroke-width="1"/></svg><span style="left:382.2px;letter-spacing:0.089px">Crop type</span><svg style="left:446px;top:13px" width="10" height="7" viewBox="0 0 10 7"><path d="M.5 1L5 5.6L9.5 1" fill="none" stroke="#868686" stroke-width="1"/></svg><span style="left:482.2px;letter-spacing:-0.35px">User</span><svg style="left:516.5px;top:13px" width="10" height="7" viewBox="0 0 10 7"><path d="M.5 1L5 5.6L9.5 1" fill="none" stroke="#868686" stroke-width="1"/></svg><span style="left:553.5px;letter-spacing:-0.2px">Date</span><svg style="left:590px;top:13px" width="10" height="7" viewBox="0 0 10 7"><path d="M.5 1L5 5.6L9.5 1" fill="none" stroke="#868686" stroke-width="1"/></svg><svg style="left:614.2px;top:12px" width="10" height="10" viewBox="0 0 10 10"><path d="M.7 .7L9.3 9.3M9.3 .7L.7 9.3" stroke="#333" stroke-width="1.1"/></svg></div>
<svg style="position:absolute;left:1099px;top:9px" width="34" height="34" viewBox="0 0 34 34"><circle cx="17" cy="17" r="16" fill="#8c8c8c" stroke="#b9b9b9" stroke-width="1"/><circle cx="17" cy="14" r="4.1" fill="none" stroke="#f4f4f4" stroke-width="1.3"/><path d="M9.3 25C9.3 21 12 20.2 17 20.2S24.7 21 24.7 25Z" fill="none" stroke="#f4f4f4" stroke-width="1.3" stroke-linejoin="round"/></svg>

<div id="legend">
 <div class="t">Sample</div><div class="hr"></div>
 <svg style="left:14.5px;top:44px" width="12" height="16" viewBox="0 0 12 16"><path d="M6 .5C2.8 .5 1 3 1 5.8C1 9 4.2 12.5 6 15.5C7.8 12.5 11 9 11 5.8C11 3 9.2 .5 6 .5Z" fill="#222"/></svg>
 <div class="i" style="top:44px">Farm</div>
 <svg style="left:13.5px;top:79px" width="14" height="12" viewBox="0 0 14 12"><path d="M.3 .5H13.7L7 11.5Z" fill="#222"/></svg>
 <div class="i" style="top:76px">Sample</div>
 <svg style="left:13.5px;top:108px" width="14" height="14" viewBox="0 0 14 14"><circle cx="7" cy="7" r="6.2" fill="#222"/></svg>
 <div class="i" style="top:107px">Field</div>
 <svg style="left:13.5px;top:138px" width="14" height="16" viewBox="0 0 14 16"><circle cx="7" cy="4.6" r="4.3" fill="#222"/><path d="M.3 15V13.2C.3 10.8 3 9.3 4.5 9.3C5.5 10 8.5 10 9.5 9.3C11 9.3 13.7 10.8 13.7 13.2V15Z" fill="#222"/></svg>
</div>
</body></html>
